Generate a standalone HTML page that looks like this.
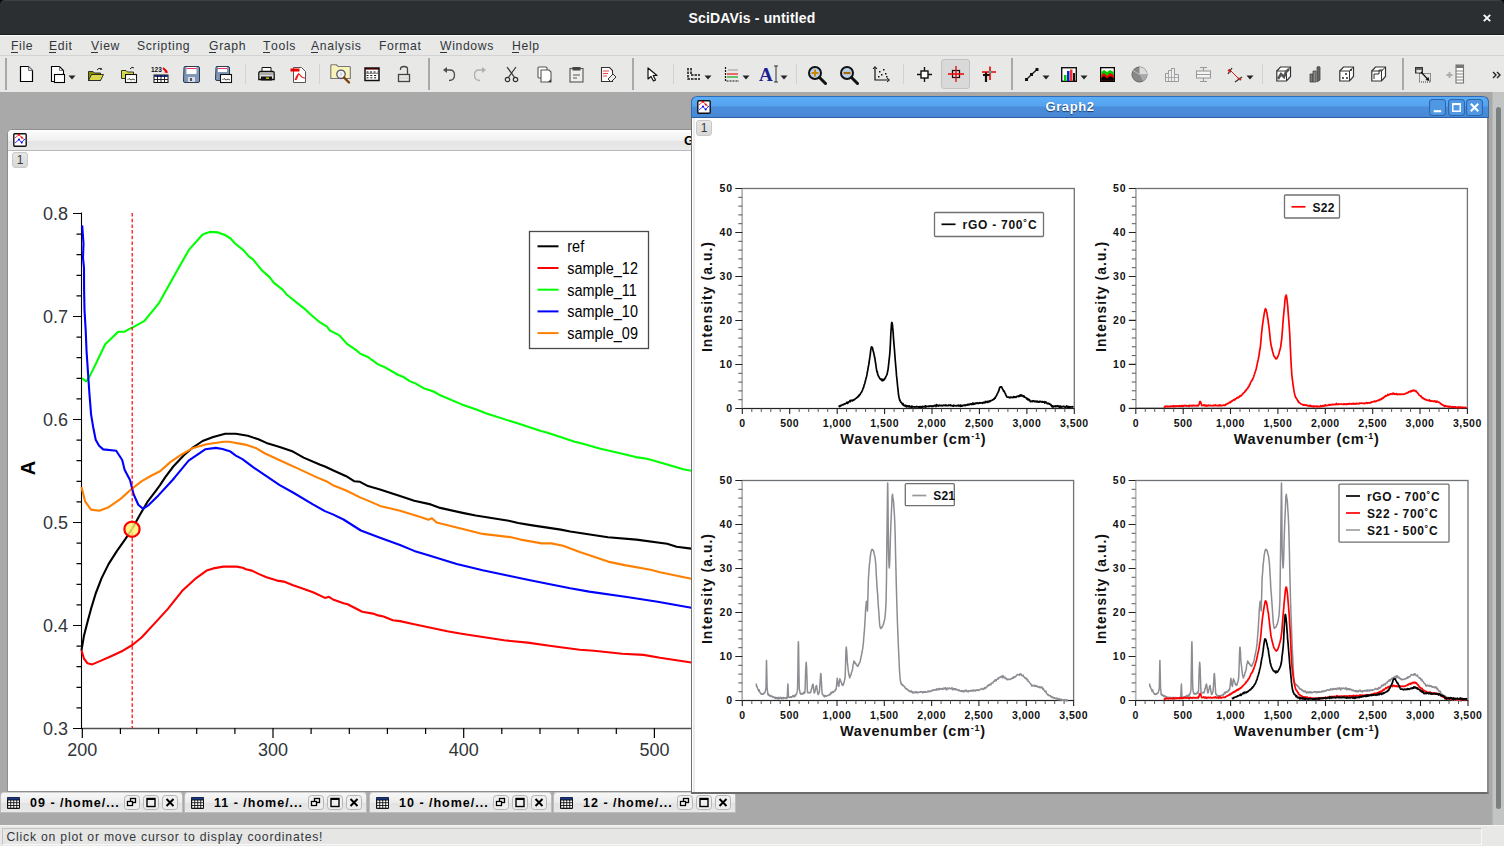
<!DOCTYPE html><html><head><meta charset="utf-8"><style>

*{margin:0;padding:0;box-sizing:border-box}
html,body{width:1504px;height:846px;overflow:hidden;background:#a9a9a9;font-family:"Liberation Sans",sans-serif;position:relative}
.a{position:absolute}
svg{position:absolute;overflow:visible}
#title{left:0;top:0;width:1504px;height:35px;background:#2b2f32;border-radius:5px 5px 0 0;border-top:1px solid #3c4145;border-bottom:1px solid #1a1c1e}
#title .t{left:0;width:1504px;top:9px;text-align:center;color:#fcfcfc;font-weight:bold;font-size:14px;letter-spacing:0.15px;line-height:16px}
#menubar{left:0;top:35px;width:1504px;height:21px;background:#e8e8e7;border-top:1px solid #fbfbfb;border-bottom:1px solid #d3d3d3}
#menubar span{position:absolute;top:3px;font-size:12.2px;line-height:14px;color:#31363b;white-space:nowrap;letter-spacing:0.65px}
#menubar u{text-decoration:none;position:relative}
#menubar u:after{content:"";position:absolute;left:0;width:7px;bottom:0px;height:1px;background:#31363b}
#toolbar{left:0;top:56px;width:1504px;height:36px;background:#e8e8e7}
.sepd{position:absolute;top:2px;width:2px;height:32px;background:#a9a9a9}
.sepl{position:absolute;top:8px;width:1px;height:20px;background:#d2d2d2}
#mdi{left:0;top:92px;width:1504px;height:733px;background:#a9a9a9;overflow:hidden}
#status{left:0;top:825px;width:1504px;height:21px;background:#e8e8e7;border-top:1px solid #f6f6f6}
#sfield{left:2px;top:2px;width:1480px;height:17px;border:1px solid #c3c3c3;border-bottom-color:#f8f8f8;border-right-color:#f8f8f8;background:#e6e6e5}
#sfield span{position:absolute;left:3.5px;top:1px;font-size:12.2px;line-height:14px;color:#31363b;letter-spacing:0.79px;white-space:nowrap}

</style></head><body>
<div class="a" style="left:0;top:0;width:1504px;height:8px;background:#050607"></div>
<div id="title" class="a"><div class="t a">SciDAVis - untitled</div>
<svg style="left:1483px;top:13px" width="8" height="8"><path d="M0.8 0.8L7.2 7.2M7.2 0.8L0.8 7.2" stroke="#fcfcfc" stroke-width="1.9"/></svg>
</div>
<div id="menubar" class="a">
<span style="left:11px"><u>F</u>ile</span>
<span style="left:49px"><u>E</u>dit</span>
<span style="left:91px"><u>V</u>iew</span>
<span style="left:137px">Scripting</span>
<span style="left:209px"><u>G</u>raph</span>
<span style="left:263px"><u>T</u>ools</span>
<span style="left:311px"><u>A</u>nalysis</span>
<span style="left:379px">For<u>m</u>at</span>
<span style="left:440px"><u>W</u>indows</span>
<span style="left:512px"><u>H</u>elp</span>
</div>
<div id="toolbar" class="a">
<div class="sepd" style="left:5px"></div>
<div class="sepd" style="left:428px"></div>
<div class="sepd" style="left:632px"></div>
<div class="sepd" style="left:1011px"></div>
<div class="sepd" style="left:1402px"></div>
<div class="sepl" style="left:245px"></div>
<div class="sepl" style="left:319px"></div>
<div class="sepl" style="left:673px"></div>
<div class="sepl" style="left:796px"></div>
<div class="sepl" style="left:903px"></div>
<div class="sepl" style="left:1262px"></div>
<svg style="left:19px;top:10px" width="15" height="17" viewBox="0 0 15 17"><path d="M1.5 0.5H9.5L13.5 4.5V15.5H1.5Z" fill="#fff" stroke="#000" stroke-width="1.2"/><path d="M9.5 0.5V4.5H13.5" fill="#cfd8e6" stroke="#555" stroke-width="0.8"/></svg>
<svg style="left:50px;top:10px" width="16" height="18" viewBox="0 0 16 18"><path d="M1.5 0.5H9.5L13.5 4.5V15.5H1.5Z" fill="#fff" stroke="#000" stroke-width="1.1"/><path d="M9.5 0.5V4.5H13.5" fill="none" stroke="#555" stroke-width="0.8"/><rect x="4.5" y="8.5" width="10" height="8" fill="#fff" stroke="#000" stroke-width="1.1"/></svg>
<svg style="left:68px;top:19px" width="8" height="5" viewBox="0 0 8 5"><path d="M0.5 0.5H7.5L4 4.5Z" fill="#232627"/></svg>
<svg style="left:88px;top:11px" width="16" height="15" viewBox="0 0 16 15"><path d="M0.5 4.5H5L6.5 6H12.5V13.5H0.5Z" fill="#8c8c00" stroke="#222" stroke-width="0.9"/><path d="M0.5 13.5L3.5 7.5H15.5L12.5 13.5Z" fill="#d8d84a" stroke="#222" stroke-width="0.9"/><path d="M9 3Q11 0 13 2" fill="none" stroke="#222" stroke-width="1"/><path d="M13 0.5L14.5 2.5L12 3Z" fill="#222"/></svg>
<svg style="left:121px;top:10px" width="16" height="17" viewBox="0 0 16 17"><path d="M0.5 4.5H5L6.5 6H12.5V12.5H0.5Z" fill="#d8d84a" stroke="#222" stroke-width="0.9"/><path d="M9 3Q11 0 13 2" fill="none" stroke="#222" stroke-width="1"/><rect x="4.5" y="8.5" width="11" height="8" fill="#fff" stroke="#111" stroke-width="1.1"/><path d="M6.5 14L8 12.5L10 14L12 13L14 14" fill="none" stroke="#111" stroke-width="0.8"/></svg>
<svg style="left:151px;top:10px" width="18" height="17" viewBox="0 0 18 17"><text x="0" y="6" font-size="6.5" font-weight="bold" font-family="Liberation Sans" fill="#111">123</text><path d="M12 2L16 6" stroke="#e00" stroke-width="2"/><path d="M15 3.5L17 7L13.5 6.5Z" fill="#e00"/><rect x="3" y="9" width="14" height="7.5" fill="#fff" stroke="#111"/><rect x="3" y="9" width="14" height="2" fill="#203080"/><path d="M3 13.5H17M6.5 9V16.5M10 9V16.5M13.5 9V16.5" stroke="#111" stroke-width="0.9"/></svg>
<svg style="left:183px;top:10px" width="18" height="17" viewBox="0 0 18 17"><path d="M1 1.5Q1 0.5 2 0.5H15Q16.5 0.5 16.5 2V15Q16.5 16.5 15 16.5H2Q0.5 16.5 0.5 15Z" fill="#7f98b8" stroke="#2a3a50" stroke-width="1"/><rect x="3.5" y="1" width="10" height="7" fill="#fff"/><path d="M3.5 2.5H13.5" stroke="#e36" stroke-width="1"/><rect x="5" y="11" width="7" height="5" fill="#d8dde6"/><rect x="7" y="12" width="2" height="3" fill="#555"/></svg>
<svg style="left:215px;top:10px" width="18" height="17" viewBox="0 0 18 17"><path d="M1 1.5Q1 0.5 2 0.5H13Q14.5 0.5 14.5 2V13Q14.5 14.5 13 14.5H2Q0.5 14.5 0.5 13Z" fill="#7f98b8" stroke="#2a3a50" stroke-width="1"/><rect x="3" y="1" width="9" height="5" fill="#fff"/><path d="M3 2.5H12" stroke="#e36" stroke-width="1"/><rect x="5.5" y="8.5" width="11" height="8" fill="#fff" stroke="#111" stroke-width="1.1"/><path d="M7.5 14L9 12.5L11 14L13 13L15 14" fill="none" stroke="#111" stroke-width="0.8"/></svg>
<svg style="left:258px;top:11px" width="17" height="15" viewBox="0 0 17 15"><path d="M4 0.5H13V5H4Z" fill="#fff" stroke="#111"/><path d="M0.8 6Q0.8 4.5 2.5 4.5H14.5Q16.2 4.5 16.2 6V12.5H0.8Z" fill="#ddd" stroke="#111" stroke-width="1.3"/><rect x="3" y="9.5" width="11" height="4" fill="#111"/><rect x="8" y="10.5" width="3" height="1.2" fill="#ee0"/><path d="M2 7H15" stroke="#666" stroke-width="0.8"/></svg>
<svg style="left:290px;top:10px" width="17" height="17" viewBox="0 0 17 17"><path d="M3.5 1.5H11.5L15.5 5.5V16.5H3.5Z" fill="#fff" stroke="#555" stroke-width="1"/><rect x="0.5" y="2.5" width="9" height="3" fill="#e00"/><path d="M5 14Q8 6 10 9Q12 12 15 12M9 7Q7 12 6 14" fill="none" stroke="#e22" stroke-width="1.1"/></svg>
<svg style="left:330px;top:8px" width="22" height="21" viewBox="0 0 22 21"><path d="M0.8 1.5Q0.8 0.8 1.5 0.8H6.5L8 2.5H19.5Q20.3 2.5 20.3 3.3V14.5H0.8Z" fill="#f8f3b8" stroke="#777" stroke-width="1.1"/><circle cx="11" cy="10.3" r="4.2" fill="#eef2f6" stroke="#556" stroke-width="1.3"/><path d="M11 8.5V11.5" stroke="#bbb" stroke-width="1"/><path d="M14 13.5L19 18.5" stroke="#7a4010" stroke-width="2.4" stroke-linecap="round"/></svg>
<svg style="left:364px;top:11px" width="16" height="15" viewBox="0 0 16 15"><rect x="1" y="1" width="14" height="12.5" fill="#fff" stroke="#111" stroke-width="1.5"/><rect x="1" y="1" width="14" height="1.6" fill="#400"/><path d="M2.5 5H13.5" stroke="#555" stroke-width="1.6" stroke-dasharray="2 1.5"/><path d="M2 6.3H14" stroke="#333" stroke-width="0.7"/><path d="M2.5 8.5H13.5M2.5 10.8H13.5" stroke="#111" stroke-width="1" stroke-dasharray="2 1.8"/></svg>
<svg style="left:397px;top:9px" width="14" height="18" viewBox="0 0 14 18"><path d="M3.5 5V4Q3.5 1.5 7 1.5Q10.5 1.5 10.5 4V9" fill="none" stroke="#444" stroke-width="1.3"/><rect x="1.5" y="9.5" width="11" height="7" fill="none" stroke="#444" stroke-width="1.3"/><path d="M3 13H11" stroke="#ccc" stroke-width="1"/></svg>
<svg style="left:442px;top:10px" width="14" height="17" viewBox="0 0 14 17"><path d="M4 4H8Q12.5 4 12.5 9Q12.5 14.5 7 14.5" fill="none" stroke="#4d4d4d" stroke-width="1.3"/><path d="M1 4L5 1V7Z" fill="#4d4d4d"/></svg>
<svg style="left:473px;top:10px" width="14" height="17" viewBox="0 0 14 17"><path d="M10 4H6Q1.5 4 1.5 9Q1.5 14.5 7 14.5" fill="none" stroke="#b0b0b0" stroke-width="1.3"/><path d="M13 4L9 1V7Z" fill="#b0b0b0"/></svg>
<svg style="left:504px;top:10px" width="15" height="17" viewBox="0 0 15 17"><path d="M3 1L11 12M12 1L4 12" stroke="#333" stroke-width="1.2"/><circle cx="3.5" cy="13.5" r="2.2" fill="none" stroke="#333" stroke-width="1.2"/><circle cx="11.5" cy="13.5" r="2.2" fill="none" stroke="#333" stroke-width="1.2"/></svg>
<svg style="left:537px;top:10px" width="15" height="17" viewBox="0 0 15 17"><rect x="1" y="1" width="9" height="11" rx="1" fill="#fff" stroke="#555" stroke-width="1.1"/><path d="M4 4H12L14 6V16H4Z" fill="#fff" stroke="#555" stroke-width="1.1"/><path d="M11 16L14 13V16Z" fill="#333"/></svg>
<svg style="left:569px;top:10px" width="15" height="17" viewBox="0 0 15 17"><rect x="1" y="2.5" width="13" height="13.5" fill="#eee" stroke="#555" stroke-width="1.1"/><rect x="3.5" y="1" width="8" height="3.5" fill="#444"/><path d="M4 9H11M4 12H8" stroke="#555" stroke-width="1"/></svg>
<svg style="left:600px;top:10px" width="17" height="17" viewBox="0 0 17 17"><path d="M1.5 1.5H9.5L12.5 4.5V15.5H1.5Z" fill="#fff" stroke="#333" stroke-width="1.1"/><path d="M3 5H9M3 7.5H8M3 10H7" stroke="#e44" stroke-width="1.1"/><path d="M8 13L13 8L16 11L11 16Z" fill="#eee" stroke="#333" stroke-width="1"/></svg>
<svg style="left:647px;top:11px" width="11" height="15" viewBox="0 0 11 15"><path d="M1 1V12L4 9.5L6.5 14L8.5 13L6.2 8.5H10Z" fill="#fff" stroke="#111" stroke-width="1.2" stroke-linejoin="round"/></svg>
<svg style="left:686px;top:11px" width="16" height="15" viewBox="0 0 16 15"><path d="M2 1V12H14M5 1V8H14" fill="none" stroke="#111" stroke-width="1.5" stroke-dasharray="2.5 1"/></svg>
<svg style="left:704px;top:19px" width="8" height="5" viewBox="0 0 8 5"><path d="M0.5 0.5H7.5L4 4.5Z" fill="#232627"/></svg>
<svg style="left:724px;top:10px" width="16" height="16" viewBox="0 0 16 16"><path d="M1.5 1V15H15" fill="none" stroke="#111" stroke-width="1.2" stroke-dasharray="2 1"/><path d="M3 8H14" stroke="#e22" stroke-width="1.3"/><path d="M3 11H14" stroke="#2a2" stroke-width="1.3"/><path d="M4 4H14" stroke="#888" stroke-width="0.8"/></svg>
<svg style="left:742px;top:19px" width="8" height="5" viewBox="0 0 8 5"><path d="M0.5 0.5H7.5L4 4.5Z" fill="#232627"/></svg>
<svg style="left:759px;top:8px" width="20" height="20" viewBox="0 0 20 20"><text x="0" y="17" font-size="19" font-weight="bold" font-family="Liberation Serif" fill="#1a2090">A</text><path d="M15 2H19M17 2V18M15 18H19" stroke="#333" stroke-width="1"/></svg>
<svg style="left:780px;top:19px" width="8" height="5" viewBox="0 0 8 5"><path d="M0.5 0.5H7.5L4 4.5Z" fill="#232627"/></svg>
<svg style="left:807px;top:9px" width="21" height="20" viewBox="0 0 21 20"><circle cx="8" cy="8" r="6" fill="#b9d0ea" stroke="#111" stroke-width="2"/><path d="M8 4.5V11.5M4.5 8H11.5" stroke="#c80" stroke-width="2"/><path d="M12.5 12.5L18.5 18.5" stroke="#111" stroke-width="3" stroke-linecap="round"/></svg>
<svg style="left:839px;top:9px" width="21" height="20" viewBox="0 0 21 20"><circle cx="8" cy="8" r="6" fill="#b9d0ea" stroke="#111" stroke-width="2"/><path d="M4.5 8H11.5" stroke="#a60" stroke-width="2.2"/><path d="M12.5 12.5L18.5 18.5" stroke="#111" stroke-width="3" stroke-linecap="round"/></svg>
<svg style="left:873px;top:10px" width="17" height="16" viewBox="0 0 17 16"><path d="M2 1V14H16" fill="none" stroke="#111" stroke-width="1.2"/><path d="M0 3L2 0.5L4 3M14 12L16.5 14L14 16" fill="none" stroke="#111" stroke-width="1"/><path d="M6 5h1.5v1.5h-1.5zM10 3h1.5v1.5h-1.5zM8 8h1.5v1.5h-1.5zM12 7h1.5v1.5h-1.5zM5 10h1.5v1.5h-1.5zM13 10h1.5v1.5h-1.5z" fill="#111"/></svg>
<svg style="left:917px;top:11px" width="15" height="15" viewBox="0 0 15 15"><path d="M7.5 0V15M0 7.5H15" stroke="#111" stroke-width="1.4"/><rect x="4" y="4" width="7" height="7" fill="#fff" stroke="#111" stroke-width="1.4"/></svg>
<div class="a" style="left:941px;top:3px;width:29px;height:30px;background:#d9d9d9;border:1px solid #c3c3c3;border-radius:3px"></div>
<svg style="left:948px;top:10px" width="16" height="16" viewBox="0 0 16 16"><rect x="4.5" y="4.5" width="7" height="7" fill="none" stroke="#111" stroke-width="1.2"/><path d="M8 0V16M0 8H16" stroke="#e00" stroke-width="1.3"/></svg>
<svg style="left:980px;top:10px" width="17" height="17" viewBox="0 0 17 17"><path d="M3 9H10M6 6V16" stroke="#111" stroke-width="2.2"/><path d="M2 6H16M10 0.5V14" stroke="#e00" stroke-width="1.6"/><rect x="9" y="5" width="2" height="2" fill="#0cc"/></svg>
<svg style="left:1025px;top:12px" width="14" height="13" viewBox="0 0 14 13"><path d="M1.5 11.5L6.5 6.5L12 1.5" stroke="#111" stroke-width="1.2"/><rect x="0" y="10" width="3" height="3" fill="#111"/><rect x="5" y="5" width="3" height="3" fill="#111"/><rect x="10.5" y="0" width="3" height="3" fill="#111"/></svg>
<svg style="left:1042px;top:19px" width="8" height="5" viewBox="0 0 8 5"><path d="M0.5 0.5H7.5L4 4.5Z" fill="#232627"/></svg>
<svg style="left:1061px;top:11px" width="16" height="15" viewBox="0 0 16 15"><rect x="0.7" y="0.7" width="14.6" height="13.6" fill="#fff" stroke="#111" stroke-width="1.4"/><rect x="3" y="8" width="2.5" height="6" fill="#0c0"/><rect x="6" y="4" width="2.5" height="10" fill="#12c"/><rect x="9" y="2.5" width="2.5" height="11.5" fill="#e33"/><rect x="12" y="6" width="2" height="8" fill="#111"/></svg>
<svg style="left:1080px;top:19px" width="8" height="5" viewBox="0 0 8 5"><path d="M0.5 0.5H7.5L4 4.5Z" fill="#232627"/></svg>
<svg style="left:1100px;top:11px" width="15" height="15" viewBox="0 0 15 15"><rect x="0" y="0" width="15" height="15" fill="#000"/><rect x="1.3" y="1.3" width="12.4" height="12.4" fill="#fff"/><path d="M1.3 5L4 3L7 5L10 3L13.7 5V13.7H1.3Z" fill="#0c0"/><path d="M1.3 8L4 6L7 9L10 6L13.7 8V13.7H1.3Z" fill="#e00"/><path d="M1.3 11L4 9L7 11.5L10 9L13.7 11V13.7H1.3Z" fill="#000"/></svg>
<svg style="left:1131px;top:10px" width="17" height="17" viewBox="0 0 17 17"><circle cx="8.5" cy="8.5" r="7.5" fill="#888" stroke="#666" stroke-width="1"/><path d="M8.5 8.5L8.5 1A7.5 7.5 0 0 1 16 8.5Z" fill="#ddd"/><path d="M8.5 8.5L16 8.5A7.5 7.5 0 0 1 12 15Z" fill="#aaa"/><path d="M8.5 8.5L2 4.5" stroke="#ccc" stroke-width="0.8"/></svg>
<svg style="left:1165px;top:11px" width="14" height="15" viewBox="0 0 14 15"><path d="M0.5 14.5V6.5H3.5V3.5H6.5V1.5H9.5V7.5H13.5V14.5Z" fill="#eee" stroke="#999" stroke-width="1"/><path d="M3.5 6.5V14.5M6.5 3.5V14.5M9.5 7.5V14.5M0.5 10.5H13.5" stroke="#999" stroke-width="0.8"/></svg>
<svg style="left:1196px;top:11px" width="15" height="15" viewBox="0 0 15 15"><path d="M7.5 0.5V4M7.5 11V14.5M4 0.5H11M4 14.5H11" stroke="#999" stroke-width="1.1"/><rect x="0.5" y="4" width="14" height="7" fill="#f4f4f4" stroke="#999" stroke-width="1.1"/><path d="M0.5 7.5H14.5" stroke="#999" stroke-width="1"/></svg>
<svg style="left:1227px;top:10px" width="16" height="17" viewBox="0 0 16 17"><path d="M2 3L13 14" stroke="#c22" stroke-width="1"/><path d="M1 8L5 2M8 16L15 11" stroke="#333" stroke-width="1.3"/><path d="M4 6L1 4" stroke="#c22" stroke-width="1.8"/><path d="M11 12L14 14" stroke="#c22" stroke-width="1.8"/></svg>
<svg style="left:1246px;top:19px" width="8" height="5" viewBox="0 0 8 5"><path d="M0.5 0.5H7.5L4 4.5Z" fill="#232627"/></svg>
<svg style="left:1276px;top:10px" width="16" height="16" viewBox="0 0 16 16"><path d="M0.8 5L4.5 1H14.5V10.5L10.5 15H0.8Z" fill="#fff" stroke="#333" stroke-width="1.2"/><path d="M0.8 5H10.5V15M10.5 5L14.5 1" fill="none" stroke="#333" stroke-width="1"/><path d="M2 13L5 8L8 11L10 6L13 3" stroke="#555" stroke-width="2.5" fill="none"/></svg>
<svg style="left:1309px;top:9px" width="13" height="18" viewBox="0 0 13 18"><path d="M1 9H4V17H1Z" fill="#777" stroke="#444" stroke-width="0.8"/><path d="M4 6H7V17H4Z" fill="#888" stroke="#444" stroke-width="0.8"/><path d="M8 2Q9.5 1 11 2V15L8 17Z" fill="#666" stroke="#444" stroke-width="0.8"/></svg>
<svg style="left:1339px;top:10px" width="17" height="16" viewBox="0 0 17 16"><path d="M0.8 5L4.5 1H14.5V10.5L10.5 15H0.8Z" fill="#fff" stroke="#333" stroke-width="1.2"/><path d="M0.8 5H10.5V15M10.5 5L14.5 1" fill="none" stroke="#333" stroke-width="1"/><circle cx="7" cy="8" r="0.9" fill="#111"/><circle cx="12" cy="4" r="0.9" fill="#111"/><circle cx="4" cy="12" r="0.9" fill="#111"/><circle cx="8" cy="12" r="0.9" fill="#111"/></svg>
<svg style="left:1371px;top:10px" width="17" height="16" viewBox="0 0 17 16"><path d="M0.8 5L4.5 1H14.5V10.5L10.5 15H0.8Z" fill="#fff" stroke="#333" stroke-width="1.2"/><path d="M0.8 5H10.5V15M10.5 5L14.5 1" fill="none" stroke="#333" stroke-width="1"/><path d="M3 13V8H8V4H12" fill="none" stroke="#333" stroke-width="1"/></svg>
<svg style="left:1415px;top:11px" width="17" height="16" viewBox="0 0 17 16"><rect x="0.5" y="0.5" width="7" height="5.5" fill="#666" stroke="#333"/><rect x="1.5" y="3" width="5" height="2.5" fill="#e8e8e8"/><rect x="4.5" y="6.5" width="11" height="8.5" fill="none" stroke="#333" stroke-width="1" stroke-dasharray="1 1"/><path d="M6 5L13 12.5" stroke="#111" stroke-width="1.2"/><path d="M14.5 14L10.5 13L13.5 10Z" fill="#111"/></svg>
<svg style="left:1446px;top:8px" width="18" height="20" viewBox="0 0 18 20"><path d="M3.5 8V14M0.5 11H6.5" stroke="#aaa" stroke-width="1.8"/><rect x="10" y="1" width="7.5" height="18" fill="#fff" stroke="#777" stroke-width="1.1"/><rect x="10" y="1" width="7.5" height="3" fill="#777"/><path d="M10 7H17.5M10 10H17.5M10 13H17.5M10 16H17.5" stroke="#777" stroke-width="0.9"/></svg>
<svg style="left:1492px;top:15px" width="10" height="8" viewBox="0 0 10 8"><path d="M1 1L4 4L1 7M5 1L8 4L5 7" fill="none" stroke="#222" stroke-width="1.4"/></svg>
</div>
<div id="mdi" class="a"></div>
<div class="a" style="left:1492px;top:92px;width:12px;height:733px;background:#c3c5c5;border-left:1px solid #b4b6b6"></div><div class="a" style="left:1496px;top:107px;width:5px;height:702px;background:#7a7f80;border-radius:3px"></div>
<div class="a" style="left:7px;top:129px;width:700px;height:663px;background:#fff;border:1px solid #8e8e8e;border-radius:5px 5px 0 0;overflow:hidden">
<div class="a" style="left:0;top:0;width:100%;height:21px;background:linear-gradient(#fbfbfb 0,#f0f0f0 50%,#e4e4e4 51%,#e9e9e9 100%);border-bottom:1px solid #b9b9b9;border-top:1px solid #fff"></div>
<svg style="left:5px;top:3px" width="14" height="14" viewBox="0 0 14 14"><rect x="0.8" y="0.8" width="12.4" height="12.4" rx="1" fill="#fff" stroke="#111" stroke-width="1.4"/><path d="M2 5L6 1.5L8.5 4.5L12 7" fill="none" stroke="#f22" stroke-width="0.9"/><path d="M2 10L6 6.5L8.5 9.5L12.5 5.5" fill="none" stroke="#22f" stroke-width="0.9"/><circle cx="6" cy="1.8" r="1" fill="#e00"/><circle cx="8.7" cy="4.6" r="1" fill="#e00"/><circle cx="6" cy="6.6" r="1" fill="#00e"/><circle cx="8.7" cy="9.6" r="1" fill="#00e"/></svg>
<div class="a" style="left:676px;top:4px;font-weight:bold;font-size:13px;color:#000;line-height:14px">Graph1</div>
<div class="a" style="left:4px;top:22px;width:16px;height:16px;border:1px solid #c8c8c8;border-radius:3px;background:linear-gradient(#e6e6e6,#d8d8d8);font-size:12px;color:#3a3a3a;text-align:center;line-height:14px">1</div>
</div>
<svg style="left:0;top:0" width="692" height="792" viewBox="0 0 692 792">
<defs><clipPath id="lc"><rect x="8" y="151" width="684" height="640"/></clipPath></defs>
<g clip-path="url(#lc)">
<path d="M81.5 212.5V728" stroke="#000" stroke-width="1.1"/>
<path d="M81.5 728.5H700" stroke="#505050" stroke-width="1.6"/>
<path d="M73 213.5H82 M76.5 234.1H82 M76.5 254.7H82 M76.5 275.3H82 M76.5 295.9H82 M73 316.5H82 M76.5 337.1H82 M76.5 357.7H82 M76.5 378.3H82 M76.5 398.9H82 M73 419.5H82 M76.5 440.1H82 M76.5 460.7H82 M76.5 481.3H82 M76.5 501.9H82 M73 522.5H82 M76.5 543.1H82 M76.5 563.7H82 M76.5 584.3H82 M76.5 604.9H82 M73 625.5H82 M76.5 646.1H82 M76.5 666.7H82 M76.5 687.3H82 M76.5 707.9H82 M73 728.5H82" stroke="#000" stroke-width="1.2"/>
<path d="M82.3 728V738 M120.4 728V734 M158.6 728V734 M196.7 728V734 M234.9 728V734 M273.0 728V738 M311.1 728V734 M349.3 728V734 M387.4 728V734 M425.6 728V734 M463.7 728V738 M501.8 728V734 M540.0 728V734 M578.1 728V734 M616.3 728V734 M654.4 728V738 M692.5 728V734" stroke="#000" stroke-width="1.2"/>
<text x="68" y="220.0" text-anchor="end" font-size="18" font-family="Liberation Sans" fill="#31363b">0.8</text>
<text x="68" y="323.0" text-anchor="end" font-size="18" font-family="Liberation Sans" fill="#31363b">0.7</text>
<text x="68" y="426.0" text-anchor="end" font-size="18" font-family="Liberation Sans" fill="#31363b">0.6</text>
<text x="68" y="529.0" text-anchor="end" font-size="18" font-family="Liberation Sans" fill="#31363b">0.5</text>
<text x="68" y="632.0" text-anchor="end" font-size="18" font-family="Liberation Sans" fill="#31363b">0.4</text>
<text x="68" y="735.0" text-anchor="end" font-size="18" font-family="Liberation Sans" fill="#31363b">0.3</text>
<text x="82.3" y="756" text-anchor="middle" font-size="18" font-family="Liberation Sans" fill="#31363b">200</text>
<text x="273.0" y="756" text-anchor="middle" font-size="18" font-family="Liberation Sans" fill="#31363b">300</text>
<text x="463.7" y="756" text-anchor="middle" font-size="18" font-family="Liberation Sans" fill="#31363b">400</text>
<text x="654.4" y="756" text-anchor="middle" font-size="18" font-family="Liberation Sans" fill="#31363b">500</text>
<text transform="translate(35 468) rotate(-90)" text-anchor="middle" font-size="20" font-weight="bold" font-family="Liberation Sans" fill="#000">A</text>
<polyline points="82.1,378.4 86.1,381.4 89.1,377.4 95.1,365.4 105.2,344.3 118.2,331.8 124.3,331.8 129.9,328.6 132.9,327.4 144.5,320.8 159.3,302.6 175.9,272.8 189.1,249.6 202.4,234.7 205.0,233.6 209.9,231.9 218.2,232.4 224.8,234.9 230.6,238.5 234.8,243.2 243.9,250.6 248.8,256.4 253.0,259.4 261.3,269.7 269.5,277.1 273.7,282.6 282.8,289.9 286.9,294.8 304.3,308.6 310.9,314.7 319.2,321.8 326.7,326.3 330.0,330.6 339.1,335.1 347.4,344.2 354.8,349.1 359.0,352.5 360.0,353.6 367.9,357.0 378.1,364.4 383.7,366.7 398.4,375.0 404.1,377.3 409.7,381.1 415.4,383.4 424.4,388.6 433.5,391.5 439.1,394.7 461.7,404.4 476.4,409.6 486.6,413.5 518.2,423.6 540.9,431.1 547.6,432.7 574.8,441.7 583.8,444.0 599.6,448.5 622.2,453.7 635.8,457.1 647.1,458.7 662.9,463.2 683.3,469.3 691.3,470.8" fill="none" stroke="#00ff00" stroke-width="2.1" stroke-linejoin="round"/>
<polyline points="81.5,650.3 83.9,636.1 87.5,621.9 91.0,608.9 95.7,593.5 101.6,578.1 108.7,563.9 117.0,550.9 125.3,539.1 132.4,528.5 139.5,515.5 147.8,501.3 156.0,490.6 160.0,485.2 165.3,477.2 173.3,466.5 183.9,455.2 193.2,447.3 202.6,441.0 213.2,437.0 225.2,433.7 235.8,433.7 247.8,435.7 258.4,439.3 266.4,442.9 279.7,447.0 293.0,451.6 303.6,457.6 319.6,464.5 324.9,466.5 332.9,470.3 346.2,476.2 354.1,481.2 360.0,481.8 368.0,486.1 380.0,489.4 400.0,496.1 414.2,500.8 430.7,504.4 440.2,507.9 463.8,513.1 475.7,515.5 508.7,520.7 518.2,523.0 532.4,525.4 560.8,529.6 570.2,531.5 608.0,537.2 636.4,539.6 667.1,543.8 676.6,546.7 691.3,548.6" fill="none" stroke="#000000" stroke-width="2.1" stroke-linejoin="round"/>
<polyline points="81.5,487.1 85.1,501.3 91.0,509.6 99.3,510.7 108.7,507.2 120.6,498.9 132.4,488.3 141.8,481.2 151.6,475.5 160.0,471.2 170.6,461.9 181.3,454.6 193.2,447.9 206.5,444.2 223.8,441.7 229.1,441.7 245.1,444.6 255.7,447.9 265.1,453.5 286.3,463.2 297.0,468.1 316.9,477.4 326.2,481.2 332.9,485.2 346.2,490.5 360.0,497.4 371.5,502.1 380.0,505.9 400.0,510.7 418.9,516.6 428.4,519.7 431.9,518.3 436.6,522.6 463.8,529.2 482.7,533.9 511.1,537.2 520.6,539.6 541.8,543.4 551.3,543.4 563.1,545.7 579.7,552.1 608.0,561.6 624.6,565.1 650.6,569.8 660.0,572.2 691.3,578.8" fill="none" stroke="#ff8000" stroke-width="2.1" stroke-linejoin="round"/>
<polyline points="82.2,225.4 83.5,243.8 83.0,258.0 84.0,268.0 84.1,290.0 84.5,310.1 85.7,330.2 86.5,350.3 88.1,374.4 89.5,394.5 91.1,414.6 93.1,426.7 95.7,439.7 99.1,445.7 103.2,449.4 116.2,450.8 122.2,460.0 124.6,469.7 130.0,480.0 133.6,494.2 138.3,504.8 143.0,508.8 148.9,504.8 158.4,495.4 172.6,480.0 176.0,475.9 188.6,460.6 205.2,449.3 215.9,447.9 222.5,449.0 230.5,451.6 235.8,455.6 242.4,459.2 253.1,467.2 279.7,485.2 293.0,492.5 312.9,504.4 324.9,511.1 332.9,514.4 343.5,519.5 360.9,530.5 380.0,537.8 400.0,545.0 414.2,550.9 428.4,555.2 456.7,563.9 482.7,570.3 508.7,575.7 527.7,579.8 551.3,584.5 570.2,588.3 589.1,591.6 626.9,597.0 657.7,601.7 691.3,607.7" fill="none" stroke="#0000ff" stroke-width="2.1" stroke-linejoin="round"/>
<polyline points="81.5,650.3 83.9,658.5 87.5,663.3 92.2,664.4 100.5,660.9 111.1,656.2 122.9,650.7 132.4,645.0 141.8,637.2 156.0,621.9 167.9,608.9 182.0,591.1 196.2,578.1 200.0,575.3 206.6,570.6 213.3,568.4 223.3,566.6 236.6,566.6 242.6,567.7 245.9,569.3 251.9,570.6 258.5,573.9 266.5,577.3 277.1,580.6 283.8,581.6 293.1,585.2 301.1,587.9 313.0,592.3 325.0,597.9 329.0,596.8 333.0,599.5 343.6,603.2 347.6,604.3 362.2,611.8 372.9,613.6 378.2,615.4 383.5,616.5 392.8,620.2 400.0,621.1 414.2,624.2 447.3,631.3 461.5,633.7 504.0,640.3 527.7,642.6 551.3,646.0 579.7,649.7 593.9,650.7 622.2,653.8 643.5,654.9 660.0,657.8 691.3,662.5" fill="none" stroke="#ff0000" stroke-width="2.1" stroke-linejoin="round"/>
<path d="M132.2 213V728" stroke="#ff0000" stroke-width="1.2" stroke-dasharray="3.5 2.2"/>
<circle cx="132" cy="529.2" r="7.6" fill="#fff270" fill-opacity="0.8" stroke="#ff0000" stroke-width="2.2"/>

<rect x="529.5" y="231.5" width="119" height="117" fill="#fff" stroke="#4a4a4a" stroke-width="1.3"/>
<path d="M537.5 246.3H558.5" stroke="#000000" stroke-width="2"/>
<text x="0" y="0" transform="translate(567.3 252.1) scale(0.875 1)" font-size="16.5" font-family="Liberation Sans" fill="#000">ref</text>
<path d="M537.5 268.0H558.5" stroke="#ff0000" stroke-width="2"/>
<text x="0" y="0" transform="translate(567.3 273.8) scale(0.875 1)" font-size="16.5" font-family="Liberation Sans" fill="#000">sample_12</text>
<path d="M537.5 289.7H558.5" stroke="#00ff00" stroke-width="2"/>
<text x="0" y="0" transform="translate(567.3 295.5) scale(0.875 1)" font-size="16.5" font-family="Liberation Sans" fill="#000">sample_11</text>
<path d="M537.5 311.4H558.5" stroke="#0000ff" stroke-width="2"/>
<text x="0" y="0" transform="translate(567.3 317.2) scale(0.875 1)" font-size="16.5" font-family="Liberation Sans" fill="#000">sample_10</text>
<path d="M537.5 333.1H558.5" stroke="#ff8000" stroke-width="2"/>
<text x="0" y="0" transform="translate(567.3 338.9) scale(0.875 1)" font-size="16.5" font-family="Liberation Sans" fill="#000">sample_09</text>
</g></svg>
<div class="a" style="left:0px;top:792px;width:183px;height:21px;background:linear-gradient(#f7f7f7,#ececec 50%,#e2e2e2 51%,#e8e8e8);border:1px solid #bdbdbd;border-top-color:#d0d0d0;border-radius:4px 4px 0 0"></div>
<svg style="left:7px;top:797px" width="13" height="12" viewBox="0 0 13 12"><rect x="0" y="0" width="13" height="12" rx="1" fill="#111"/><rect x="0.5" y="0.5" width="12" height="2" fill="#1a3a8a"/><g fill="#fff"><rect x="1.2" y="3.5" width="2.1" height="1.8"/><rect x="4.2" y="3.5" width="2.1" height="1.8"/><rect x="7.2" y="3.5" width="2.1" height="1.8"/><rect x="10.2" y="3.5" width="1.8" height="1.8"/><rect x="1.2" y="6.2" width="2.1" height="1.8"/><rect x="4.2" y="6.2" width="2.1" height="1.8"/><rect x="7.2" y="6.2" width="2.1" height="1.8"/><rect x="10.2" y="6.2" width="1.8" height="1.8"/><rect x="1.2" y="8.9" width="2.1" height="1.8"/><rect x="4.2" y="8.9" width="2.1" height="1.8"/><rect x="7.2" y="8.9" width="2.1" height="1.8"/><rect x="10.2" y="8.9" width="1.8" height="1.8"/></g></svg>
<div class="a" style="left:30px;top:796px;font-weight:bold;font-size:12.5px;line-height:14px;color:#000;letter-spacing:1.0px;white-space:nowrap">09 - /home/...</div>
<svg style="left:124.0px;top:795px" width="16" height="15" viewBox="0 0 16 15"><rect x="0.5" y="0.5" width="15" height="14" rx="3" fill="#efefef" stroke="#b5b5b5" stroke-width="1"/><rect x="6.5" y="3.5" width="5" height="4" fill="none" stroke="#000" stroke-width="1.3"/><rect x="3.5" y="6.5" width="5" height="4" fill="#fff" stroke="#000" stroke-width="1.3"/></svg>
<svg style="left:143.0px;top:795px" width="16" height="15" viewBox="0 0 16 15"><rect x="0.5" y="0.5" width="15" height="14" rx="3" fill="#efefef" stroke="#b5b5b5" stroke-width="1"/><rect x="4" y="3.5" width="8" height="8" fill="none" stroke="#000" stroke-width="1.4"/><path d="M4 4.2H12" stroke="#000" stroke-width="1.6"/></svg>
<svg style="left:162.0px;top:795px" width="16" height="15" viewBox="0 0 16 15"><rect x="0.5" y="0.5" width="15" height="14" rx="3" fill="#efefef" stroke="#b5b5b5" stroke-width="1"/><path d="M4.5 4L11.5 11M11.5 4L4.5 11" stroke="#000" stroke-width="2"/></svg>
<div class="a" style="left:184px;top:792px;width:183px;height:21px;background:linear-gradient(#f7f7f7,#ececec 50%,#e2e2e2 51%,#e8e8e8);border:1px solid #bdbdbd;border-top-color:#d0d0d0;border-radius:4px 4px 0 0"></div>
<svg style="left:191px;top:797px" width="13" height="12" viewBox="0 0 13 12"><rect x="0" y="0" width="13" height="12" rx="1" fill="#111"/><rect x="0.5" y="0.5" width="12" height="2" fill="#1a3a8a"/><g fill="#fff"><rect x="1.2" y="3.5" width="2.1" height="1.8"/><rect x="4.2" y="3.5" width="2.1" height="1.8"/><rect x="7.2" y="3.5" width="2.1" height="1.8"/><rect x="10.2" y="3.5" width="1.8" height="1.8"/><rect x="1.2" y="6.2" width="2.1" height="1.8"/><rect x="4.2" y="6.2" width="2.1" height="1.8"/><rect x="7.2" y="6.2" width="2.1" height="1.8"/><rect x="10.2" y="6.2" width="1.8" height="1.8"/><rect x="1.2" y="8.9" width="2.1" height="1.8"/><rect x="4.2" y="8.9" width="2.1" height="1.8"/><rect x="7.2" y="8.9" width="2.1" height="1.8"/><rect x="10.2" y="8.9" width="1.8" height="1.8"/></g></svg>
<div class="a" style="left:214px;top:796px;font-weight:bold;font-size:12.5px;line-height:14px;color:#000;letter-spacing:1.0px;white-space:nowrap">11 - /home/...</div>
<svg style="left:308.0px;top:795px" width="16" height="15" viewBox="0 0 16 15"><rect x="0.5" y="0.5" width="15" height="14" rx="3" fill="#efefef" stroke="#b5b5b5" stroke-width="1"/><rect x="6.5" y="3.5" width="5" height="4" fill="none" stroke="#000" stroke-width="1.3"/><rect x="3.5" y="6.5" width="5" height="4" fill="#fff" stroke="#000" stroke-width="1.3"/></svg>
<svg style="left:327.0px;top:795px" width="16" height="15" viewBox="0 0 16 15"><rect x="0.5" y="0.5" width="15" height="14" rx="3" fill="#efefef" stroke="#b5b5b5" stroke-width="1"/><rect x="4" y="3.5" width="8" height="8" fill="none" stroke="#000" stroke-width="1.4"/><path d="M4 4.2H12" stroke="#000" stroke-width="1.6"/></svg>
<svg style="left:346.0px;top:795px" width="16" height="15" viewBox="0 0 16 15"><rect x="0.5" y="0.5" width="15" height="14" rx="3" fill="#efefef" stroke="#b5b5b5" stroke-width="1"/><path d="M4.5 4L11.5 11M11.5 4L4.5 11" stroke="#000" stroke-width="2"/></svg>
<div class="a" style="left:369px;top:792px;width:183px;height:21px;background:linear-gradient(#f7f7f7,#ececec 50%,#e2e2e2 51%,#e8e8e8);border:1px solid #bdbdbd;border-top-color:#d0d0d0;border-radius:4px 4px 0 0"></div>
<svg style="left:376px;top:797px" width="13" height="12" viewBox="0 0 13 12"><rect x="0" y="0" width="13" height="12" rx="1" fill="#111"/><rect x="0.5" y="0.5" width="12" height="2" fill="#1a3a8a"/><g fill="#fff"><rect x="1.2" y="3.5" width="2.1" height="1.8"/><rect x="4.2" y="3.5" width="2.1" height="1.8"/><rect x="7.2" y="3.5" width="2.1" height="1.8"/><rect x="10.2" y="3.5" width="1.8" height="1.8"/><rect x="1.2" y="6.2" width="2.1" height="1.8"/><rect x="4.2" y="6.2" width="2.1" height="1.8"/><rect x="7.2" y="6.2" width="2.1" height="1.8"/><rect x="10.2" y="6.2" width="1.8" height="1.8"/><rect x="1.2" y="8.9" width="2.1" height="1.8"/><rect x="4.2" y="8.9" width="2.1" height="1.8"/><rect x="7.2" y="8.9" width="2.1" height="1.8"/><rect x="10.2" y="8.9" width="1.8" height="1.8"/></g></svg>
<div class="a" style="left:399px;top:796px;font-weight:bold;font-size:12.5px;line-height:14px;color:#000;letter-spacing:1.0px;white-space:nowrap">10 - /home/...</div>
<svg style="left:493.0px;top:795px" width="16" height="15" viewBox="0 0 16 15"><rect x="0.5" y="0.5" width="15" height="14" rx="3" fill="#efefef" stroke="#b5b5b5" stroke-width="1"/><rect x="6.5" y="3.5" width="5" height="4" fill="none" stroke="#000" stroke-width="1.3"/><rect x="3.5" y="6.5" width="5" height="4" fill="#fff" stroke="#000" stroke-width="1.3"/></svg>
<svg style="left:512.0px;top:795px" width="16" height="15" viewBox="0 0 16 15"><rect x="0.5" y="0.5" width="15" height="14" rx="3" fill="#efefef" stroke="#b5b5b5" stroke-width="1"/><rect x="4" y="3.5" width="8" height="8" fill="none" stroke="#000" stroke-width="1.4"/><path d="M4 4.2H12" stroke="#000" stroke-width="1.6"/></svg>
<svg style="left:531.0px;top:795px" width="16" height="15" viewBox="0 0 16 15"><rect x="0.5" y="0.5" width="15" height="14" rx="3" fill="#efefef" stroke="#b5b5b5" stroke-width="1"/><path d="M4.5 4L11.5 11M11.5 4L4.5 11" stroke="#000" stroke-width="2"/></svg>
<div class="a" style="left:553px;top:792px;width:183px;height:21px;background:linear-gradient(#f7f7f7,#ececec 50%,#e2e2e2 51%,#e8e8e8);border:1px solid #bdbdbd;border-top-color:#d0d0d0;border-radius:4px 4px 0 0"></div>
<svg style="left:560px;top:797px" width="13" height="12" viewBox="0 0 13 12"><rect x="0" y="0" width="13" height="12" rx="1" fill="#111"/><rect x="0.5" y="0.5" width="12" height="2" fill="#1a3a8a"/><g fill="#fff"><rect x="1.2" y="3.5" width="2.1" height="1.8"/><rect x="4.2" y="3.5" width="2.1" height="1.8"/><rect x="7.2" y="3.5" width="2.1" height="1.8"/><rect x="10.2" y="3.5" width="1.8" height="1.8"/><rect x="1.2" y="6.2" width="2.1" height="1.8"/><rect x="4.2" y="6.2" width="2.1" height="1.8"/><rect x="7.2" y="6.2" width="2.1" height="1.8"/><rect x="10.2" y="6.2" width="1.8" height="1.8"/><rect x="1.2" y="8.9" width="2.1" height="1.8"/><rect x="4.2" y="8.9" width="2.1" height="1.8"/><rect x="7.2" y="8.9" width="2.1" height="1.8"/><rect x="10.2" y="8.9" width="1.8" height="1.8"/></g></svg>
<div class="a" style="left:583px;top:796px;font-weight:bold;font-size:12.5px;line-height:14px;color:#000;letter-spacing:1.0px;white-space:nowrap">12 - /home/...</div>
<svg style="left:677.0px;top:795px" width="16" height="15" viewBox="0 0 16 15"><rect x="0.5" y="0.5" width="15" height="14" rx="3" fill="#efefef" stroke="#b5b5b5" stroke-width="1"/><rect x="6.5" y="3.5" width="5" height="4" fill="none" stroke="#000" stroke-width="1.3"/><rect x="3.5" y="6.5" width="5" height="4" fill="#fff" stroke="#000" stroke-width="1.3"/></svg>
<svg style="left:696.0px;top:795px" width="16" height="15" viewBox="0 0 16 15"><rect x="0.5" y="0.5" width="15" height="14" rx="3" fill="#efefef" stroke="#b5b5b5" stroke-width="1"/><rect x="4" y="3.5" width="8" height="8" fill="none" stroke="#000" stroke-width="1.4"/><path d="M4 4.2H12" stroke="#000" stroke-width="1.6"/></svg>
<svg style="left:715.0px;top:795px" width="16" height="15" viewBox="0 0 16 15"><rect x="0.5" y="0.5" width="15" height="14" rx="3" fill="#efefef" stroke="#b5b5b5" stroke-width="1"/><path d="M4.5 4L11.5 11M11.5 4L4.5 11" stroke="#000" stroke-width="2"/></svg>
<div class="a" style="left:689px;top:94px;width:802px;height:30px;border-radius:8px 8px 0 0;background:#aca7a1"></div>
<div class="a" style="left:691px;top:96px;width:798px;height:698px;background:#fff;border:1px solid #707070;border-top:none;border-right:2px solid #8a8a8a;border-bottom:2px solid #6a6a6a;border-radius:6px 6px 0 0"></div>
<div class="a" style="left:691px;top:96px;width:798px;height:22px;border-radius:6px 6px 0 0;background:linear-gradient(#5badf6 0%,#56a2ef 45%,#4a8ddb 50%,#4788d5 100%);border:1px solid #2e6bb8;border-bottom:1px solid #2a5fa6"></div>
<div class="a" style="left:691px;top:100px;width:758px;text-align:center;left:691px;font-weight:bold;font-size:13px;line-height:14px;color:#fff;letter-spacing:0.6px;text-shadow:0 1px 1px #1a3a6a">Graph2</div>
<div class="a" style="left:693px;top:118px;width:2px;height:674px;background:#ececec"></div>
<svg style="left:697px;top:100px" width="14" height="14" viewBox="0 0 14 14"><rect x="0.8" y="0.8" width="12.4" height="12.4" rx="1" fill="#fff" stroke="#111" stroke-width="1.4"/><path d="M2 5L6 1.5L8.5 4.5L12 7" fill="none" stroke="#f22" stroke-width="0.9"/><path d="M2 10L6 6.5L8.5 9.5L12.5 5.5" fill="none" stroke="#22f" stroke-width="0.9"/><circle cx="6" cy="1.8" r="1" fill="#e00"/><circle cx="8.7" cy="4.6" r="1" fill="#e00"/><circle cx="6" cy="6.6" r="1" fill="#00e"/><circle cx="8.7" cy="9.6" r="1" fill="#00e"/></svg>
<svg style="left:1429px;top:99px" width="17" height="17" viewBox="0 0 16 16"><rect x="0.5" y="0.5" width="15" height="15" rx="3" fill="#5098e4" stroke="#2d66ad" stroke-width="1"/><path d="M4.5 11.5H11.5" stroke="#fff" stroke-width="2"/></svg>
<svg style="left:1448px;top:99px" width="17" height="17" viewBox="0 0 16 16"><rect x="0.5" y="0.5" width="15" height="15" rx="3" fill="#5098e4" stroke="#2d66ad" stroke-width="1"/><rect x="4.5" y="4.5" width="7" height="7" fill="none" stroke="#fff" stroke-width="1.4"/><path d="M4.5 5H11.5" stroke="#fff" stroke-width="1.5"/></svg>
<svg style="left:1466px;top:99px" width="17" height="17" viewBox="0 0 16 16"><rect x="0.5" y="0.5" width="15" height="15" rx="3" fill="#5098e4" stroke="#2d66ad" stroke-width="1"/><path d="M4.5 4.5L11.5 11.5M11.5 4.5L4.5 11.5" stroke="#fff" stroke-width="2"/></svg>
<div class="a" style="left:696px;top:120px;width:16px;height:16px;border:1px solid #c8c8c8;border-radius:3px;background:linear-gradient(#e6e6e6,#d8d8d8);font-size:12px;color:#3a3a3a;text-align:center;line-height:14px">1</div>
<svg style="left:0;top:0" width="1504" height="846" viewBox="0 0 1504 846">
<rect x="742.3" y="188.5" width="332.0" height="220.0" fill="none" stroke="#6e7276" stroke-width="1.3"/>
<path d="M742.3 188.5V408.5" stroke="#b8b8b8" stroke-width="1.2"/>
<path d="M742.3 408.5H1074.3" stroke="#222" stroke-width="1.2"/>
<path d="M735.3 408.5H742.3 M735.3 364.5H742.3 M735.3 320.5H742.3 M735.3 276.5H742.3 M735.3 232.5H742.3 M735.3 188.5H742.3 M742.3 408.5V414.0 M789.7 408.5V414.0 M837.2 408.5V414.0 M884.6 408.5V414.0 M932.0 408.5V414.0 M979.4 408.5V414.0 M1026.9 408.5V414.0 M1074.3 408.5V414.0" stroke="#222" stroke-width="1.1"/>
<path d="M738.3 399.7H742.3 M738.3 390.9H742.3 M738.3 382.1H742.3 M738.3 373.3H742.3 M738.3 355.7H742.3 M738.3 346.9H742.3 M738.3 338.1H742.3 M738.3 329.3H742.3 M738.3 311.7H742.3 M738.3 302.9H742.3 M738.3 294.1H742.3 M738.3 285.3H742.3 M738.3 267.7H742.3 M738.3 258.9H742.3 M738.3 250.1H742.3 M738.3 241.3H742.3 M738.3 223.7H742.3 M738.3 214.9H742.3 M738.3 206.1H742.3 M738.3 197.3H742.3 M751.8 408.5V412.0 M761.3 408.5V412.0 M770.8 408.5V412.0 M780.2 408.5V412.0 M799.2 408.5V412.0 M808.7 408.5V412.0 M818.2 408.5V412.0 M827.7 408.5V412.0 M846.6 408.5V412.0 M856.1 408.5V412.0 M865.6 408.5V412.0 M875.1 408.5V412.0 M894.1 408.5V412.0 M903.6 408.5V412.0 M913.0 408.5V412.0 M922.5 408.5V412.0 M941.5 408.5V412.0 M951.0 408.5V412.0 M960.5 408.5V412.0 M970.0 408.5V412.0 M988.9 408.5V412.0 M998.4 408.5V412.0 M1007.9 408.5V412.0 M1017.4 408.5V412.0 M1036.4 408.5V412.0 M1045.8 408.5V412.0 M1055.3 408.5V412.0 M1064.8 408.5V412.0" stroke="#555" stroke-width="1"/>
<text x="733.3" y="412.3" text-anchor="end" font-size="10.5" font-weight="bold" font-family="Liberation Sans" fill="#111" letter-spacing="1.1">0</text>
<text x="733.3" y="368.3" text-anchor="end" font-size="10.5" font-weight="bold" font-family="Liberation Sans" fill="#111" letter-spacing="1.1">10</text>
<text x="733.3" y="324.3" text-anchor="end" font-size="10.5" font-weight="bold" font-family="Liberation Sans" fill="#111" letter-spacing="1.1">20</text>
<text x="733.3" y="280.3" text-anchor="end" font-size="10.5" font-weight="bold" font-family="Liberation Sans" fill="#111" letter-spacing="1.1">30</text>
<text x="733.3" y="236.3" text-anchor="end" font-size="10.5" font-weight="bold" font-family="Liberation Sans" fill="#111" letter-spacing="1.1">40</text>
<text x="733.3" y="192.3" text-anchor="end" font-size="10.5" font-weight="bold" font-family="Liberation Sans" fill="#111" letter-spacing="1.1">50</text>
<text x="742.3" y="427.0" text-anchor="middle" font-size="10.5" font-weight="bold" font-family="Liberation Sans" fill="#111" letter-spacing="0.5">0</text>
<text x="789.7" y="427.0" text-anchor="middle" font-size="10.5" font-weight="bold" font-family="Liberation Sans" fill="#111" letter-spacing="0.5">500</text>
<text x="837.2" y="427.0" text-anchor="middle" font-size="10.5" font-weight="bold" font-family="Liberation Sans" fill="#111" letter-spacing="0.5">1,000</text>
<text x="884.6" y="427.0" text-anchor="middle" font-size="10.5" font-weight="bold" font-family="Liberation Sans" fill="#111" letter-spacing="0.5">1,500</text>
<text x="932.0" y="427.0" text-anchor="middle" font-size="10.5" font-weight="bold" font-family="Liberation Sans" fill="#111" letter-spacing="0.5">2,000</text>
<text x="979.4" y="427.0" text-anchor="middle" font-size="10.5" font-weight="bold" font-family="Liberation Sans" fill="#111" letter-spacing="0.5">2,500</text>
<text x="1026.9" y="427.0" text-anchor="middle" font-size="10.5" font-weight="bold" font-family="Liberation Sans" fill="#111" letter-spacing="0.5">3,000</text>
<text x="1074.3" y="427.0" text-anchor="middle" font-size="10.5" font-weight="bold" font-family="Liberation Sans" fill="#111" letter-spacing="0.5">3,500</text>
<text x="913.3" y="444.0" text-anchor="middle" font-size="14.5" font-weight="bold" font-family="Liberation Sans" fill="#111" letter-spacing="0.75">Wavenumber (cm<tspan font-size="9" dy="-5">-1</tspan><tspan dy="5">)</tspan></text>
<text transform="translate(712.3 296.5) rotate(-90)" text-anchor="middle" font-size="13.8" font-weight="bold" font-family="Liberation Sans" fill="#111" letter-spacing="1.1">Intensity (a.u.)</text>
<polyline points="838.5,406.6 838.9,406.3 839.2,406.3 839.6,406.7 840.0,405.7 840.4,405.7 840.8,405.9 841.1,405.3 841.5,405.2 841.9,405.0 842.3,405.0 842.7,404.6 843.0,404.9 843.4,404.5 843.8,404.4 844.2,403.9 844.6,403.9 844.9,403.8 845.3,403.8 845.7,403.4 846.1,403.2 846.5,403.1 846.8,402.3 847.2,402.2 847.6,403.4 848.0,402.9 848.4,402.1 848.7,402.1 849.1,401.7 849.5,401.5 849.9,400.7 850.2,401.7 850.6,401.2 851.0,400.2 851.4,400.6 851.8,400.4 852.1,400.6 852.5,400.9 852.9,400.1 853.3,399.9 853.7,400.2 854.0,399.8 854.4,399.4 854.8,399.4 855.2,398.9 855.6,398.6 855.9,398.4 856.3,398.3 856.5,397.8 856.7,397.5 857.1,397.4 857.5,397.5 857.8,396.6 858.2,396.6 858.6,395.7 859.0,396.0 859.4,394.8 859.7,394.7 860.1,394.6 860.5,393.7 860.9,393.0 861.3,392.3 861.6,392.1 861.8,391.8 862.0,391.0 862.4,390.4 862.8,389.3 863.1,388.1 863.5,387.9 863.9,386.1 864.3,384.5 864.7,383.8 865.0,382.6 865.4,380.7 865.8,379.4 866.2,377.6 866.6,376.4 866.9,374.9 867.3,372.4 867.7,370.5 868.1,367.9 868.5,366.0 868.8,364.5 869.1,362.7 869.2,361.4 869.6,358.9 870.0,356.4 870.4,353.2 870.7,350.3 871.1,348.1 871.5,346.8 871.7,346.8 871.9,347.0 872.3,347.6 872.6,348.2 873.0,350.7 873.4,351.5 873.8,353.2 874.2,355.4 874.3,355.6 874.5,356.8 874.9,358.4 875.3,361.3 875.7,363.6 876.0,366.0 876.4,368.7 876.8,371.1 877.0,372.1 877.2,371.6 877.6,373.5 877.9,374.9 878.3,375.6 878.7,376.7 879.1,377.1 879.5,377.9 879.7,378.1 879.8,378.6 880.2,378.5 880.6,379.4 881.0,379.1 881.4,379.0 881.7,380.3 882.1,380.8 882.5,379.9 882.9,379.2 883.0,380.5 883.3,380.5 883.6,379.7 884.0,379.9 884.4,379.4 884.8,378.8 885.2,377.9 885.5,377.6 885.9,376.5 886.3,375.9 886.7,375.2 887.0,374.3 887.1,374.3 887.4,372.5 887.8,370.8 888.2,368.3 888.6,364.5 888.9,361.8 889.3,358.4 889.6,355.5 889.7,354.8 890.1,349.2 890.5,341.8 890.8,334.3 891.2,328.2 891.6,323.1 891.9,322.5 892.0,322.7 892.4,324.4 892.7,327.8 893.1,331.9 893.5,338.2 893.9,342.9 894.2,347.2 894.3,347.5 894.6,351.8 895.0,357.0 895.4,362.0 895.8,366.5 896.2,371.0 896.5,375.4 896.9,378.8 897.3,383.0 897.7,387.0 898.1,390.4 898.4,393.6 898.8,396.3 899.2,398.3 899.5,399.2 899.6,400.1 900.0,400.0 900.3,401.3 900.7,402.2 901.1,402.2 901.5,402.5 901.8,403.3 902.2,403.8 902.6,404.6 903.0,403.6 903.4,404.6 903.7,405.5 904.1,405.5 904.2,405.3 904.5,405.9 904.9,405.4 905.3,405.8 905.6,405.3 906.0,405.5 906.4,406.9 906.8,406.0 907.2,406.7 907.5,405.8 907.9,406.2 908.3,406.2 908.7,406.8 909.1,405.9 909.4,405.8 909.8,407.0 910.2,406.5 910.6,406.9 911.0,406.7 911.3,407.2 911.7,406.1 912.1,407.1 912.5,406.8 912.9,406.6 913.2,407.0 913.6,406.8 914.0,406.9 914.4,406.8 914.8,407.2 915.1,406.9 915.5,406.8 915.9,406.9 916.3,406.7 916.6,406.8 917.0,406.5 917.4,406.9 917.8,406.8 918.2,407.0 918.5,406.9 918.9,407.2 919.3,406.6 919.7,407.1 920.0,407.0 920.1,406.6 920.4,406.6 920.8,406.9 921.2,407.4 921.6,406.6 922.0,406.6 922.3,407.2 922.7,406.4 923.1,406.9 923.5,407.0 923.9,406.6 924.2,406.7 924.6,406.5 925.0,407.1 925.4,405.9 925.8,406.7 926.1,407.0 926.5,406.2 926.9,406.5 927.3,406.3 927.7,406.5 928.0,406.3 928.4,406.2 928.8,406.5 929.2,406.0 929.5,406.3 929.9,406.5 930.3,406.1 930.7,405.9 931.1,406.1 931.4,406.3 931.8,405.8 932.2,406.6 932.6,406.3 933.0,405.9 933.3,406.3 933.7,405.8 934.1,405.8 934.5,405.4 934.9,406.0 935.2,405.9 935.6,405.5 936.0,406.5 936.4,404.5 936.8,405.8 937.1,405.8 937.5,405.2 937.9,405.5 938.3,406.1 938.7,405.3 939.0,405.2 939.4,405.6 939.8,405.5 940.2,405.3 940.6,405.7 940.9,405.3 941.3,405.3 941.7,405.7 942.1,405.9 942.4,405.5 942.8,405.7 943.2,405.1 943.6,405.4 944.0,405.2 944.3,405.4 944.7,405.3 945.1,405.7 945.5,405.2 945.9,404.8 946.2,405.6 946.6,405.7 947.0,405.5 947.4,405.6 947.8,405.7 948.1,405.4 948.5,405.6 948.9,405.0 949.3,405.5 949.7,405.4 950.0,405.2 950.4,405.6 950.8,405.0 951.2,405.7 951.6,405.8 951.9,405.7 952.3,405.6 952.7,406.0 953.1,405.6 953.5,406.1 953.8,405.1 954.2,405.6 954.6,405.8 955.0,405.9 955.3,405.7 955.7,405.6 956.1,405.9 956.5,405.9 956.9,405.6 957.2,405.8 957.6,405.3 958.0,405.2 958.4,405.6 958.8,405.4 959.1,406.1 959.5,405.4 959.9,405.6 960.3,405.4 960.4,405.0 960.7,406.4 961.0,405.5 961.4,406.0 961.8,405.3 962.2,406.0 962.6,405.7 962.9,405.4 963.3,405.2 963.7,405.4 964.1,405.6 964.5,405.5 964.8,404.9 965.2,405.2 965.6,405.7 966.0,404.8 966.4,404.8 966.7,404.6 967.1,405.0 967.5,404.5 967.9,405.1 968.2,404.5 968.6,404.8 969.0,404.3 969.4,404.1 969.8,404.6 970.1,404.3 970.5,404.2 970.9,403.7 971.3,403.8 971.7,404.5 972.0,403.8 972.4,403.6 972.8,403.1 973.2,404.4 973.6,403.9 973.9,403.2 974.3,404.1 974.7,404.0 975.1,403.4 975.5,403.1 975.8,403.7 976.2,403.2 976.6,403.3 977.0,402.8 977.4,403.3 977.7,402.9 978.1,403.5 978.5,403.2 978.9,403.1 979.3,402.7 979.6,402.8 980.0,403.2 980.4,402.7 980.8,402.6 981.2,402.9 981.5,402.9 981.9,402.8 982.3,403.3 982.7,402.6 983.0,402.5 983.4,402.8 983.8,402.2 984.2,402.9 984.6,402.6 984.9,402.5 985.3,401.5 985.7,402.7 986.1,401.9 986.5,401.7 986.8,401.8 987.2,401.5 987.6,402.1 988.0,402.5 988.1,401.4 988.4,402.0 988.7,401.6 989.1,401.8 989.5,400.9 989.9,400.9 990.3,401.3 990.6,400.6 991.0,400.7 991.4,400.6 991.8,400.4 992.2,400.3 992.5,399.8 992.9,399.7 993.3,399.7 993.7,399.0 994.1,399.3 994.4,398.7 994.5,398.5 994.8,397.9 995.2,398.1 995.6,396.7 995.9,396.6 996.3,395.9 996.7,395.3 997.1,394.0 997.5,393.4 997.8,392.9 998.2,392.2 998.6,391.1 999.0,390.2 999.4,388.5 999.7,387.5 1000.1,387.0 1000.5,386.9 1000.6,387.1 1000.9,387.0 1001.3,386.9 1001.6,386.9 1002.0,387.8 1002.4,388.8 1002.8,389.3 1003.2,390.1 1003.5,390.9 1003.9,391.3 1004.0,391.3 1004.3,391.2 1004.7,392.6 1005.1,393.0 1005.4,393.7 1005.8,395.1 1006.2,395.4 1006.6,396.3 1007.0,397.1 1007.2,397.0 1007.3,397.1 1007.7,397.2 1008.1,397.2 1008.5,397.1 1008.8,397.1 1009.2,397.6 1009.6,397.3 1010.0,397.8 1010.4,397.2 1010.7,397.1 1011.1,397.3 1011.5,397.3 1011.9,397.2 1012.3,397.6 1012.6,397.5 1013.0,397.2 1013.4,397.1 1013.6,397.3 1013.8,396.5 1014.2,397.4 1014.5,397.0 1014.9,396.8 1015.3,397.2 1015.7,397.3 1016.1,397.3 1016.4,396.7 1016.8,396.3 1017.2,396.4 1017.6,396.3 1018.0,396.4 1018.3,395.9 1018.7,396.7 1019.1,395.8 1019.5,395.7 1019.9,396.1 1020.2,394.8 1020.6,396.0 1021.0,395.9 1021.1,395.9 1021.4,395.1 1021.7,395.9 1022.1,395.4 1022.5,395.6 1022.9,395.8 1023.3,396.6 1023.6,396.5 1024.0,395.9 1024.4,397.2 1024.8,397.3 1025.2,397.3 1025.5,397.3 1025.9,397.7 1026.3,397.9 1026.7,398.8 1027.1,398.4 1027.4,398.8 1027.8,399.8 1028.2,399.0 1028.6,399.0 1029.0,400.3 1029.3,400.3 1029.7,400.0 1030.1,401.2 1030.5,401.6 1030.9,401.5 1031.2,401.3 1031.6,401.4 1031.7,401.0 1032.0,401.1 1032.4,401.7 1032.8,401.1 1033.1,400.7 1033.5,400.9 1033.9,401.0 1034.3,401.4 1034.6,401.1 1035.0,401.8 1035.4,401.2 1035.8,401.5 1036.2,401.1 1036.5,401.4 1036.9,401.9 1037.3,401.5 1037.7,401.2 1038.1,402.0 1038.4,401.8 1038.8,401.9 1039.2,402.2 1039.6,401.3 1040.0,401.2 1040.3,401.4 1040.7,401.7 1041.1,401.8 1041.5,401.7 1041.9,402.1 1042.2,401.6 1042.3,401.5 1042.6,401.6 1043.0,402.2 1043.4,402.0 1043.8,402.2 1044.1,401.6 1044.5,402.2 1044.9,403.0 1045.3,402.3 1045.7,401.9 1046.0,402.4 1046.4,402.4 1046.8,402.8 1047.2,403.7 1047.6,403.7 1047.9,403.7 1048.3,403.4 1048.7,403.4 1049.1,403.4 1049.4,404.0 1049.8,403.8 1050.2,404.5 1050.6,404.9 1051.0,404.7 1051.3,405.6 1051.7,406.5 1052.1,406.1 1052.5,405.8 1052.9,407.1 1053.0,406.1 1053.2,406.1 1053.6,406.6 1054.0,406.6 1054.4,406.3 1054.8,406.4 1055.1,405.8 1055.5,406.1 1055.9,406.8 1056.3,406.6 1056.7,406.1 1057.0,405.7 1057.4,406.3 1057.8,406.3 1058.2,405.8 1058.6,406.5 1058.9,406.6 1059.3,407.1 1059.7,406.8 1060.1,405.9 1060.5,407.1 1060.8,406.7 1061.2,407.2 1061.6,406.7 1062.0,406.4 1062.3,406.8 1062.7,406.5 1063.1,406.5 1063.5,406.6 1063.9,406.2 1064.2,406.6 1064.6,407.0 1065.0,407.1 1065.4,407.2 1065.8,406.7 1066.1,407.0 1066.5,406.0 1066.9,406.3 1067.3,407.0 1067.7,407.1 1068.0,406.4 1068.4,407.6 1068.8,407.1 1069.2,406.6 1069.6,407.3 1069.9,407.2 1070.3,407.1 1070.7,406.8 1071.1,406.9 1071.5,406.9 1071.8,406.8 1072.2,407.0 1072.6,406.6 1073.0,407.3 1073.2,407.5" fill="none" stroke="#000" stroke-width="1.7" stroke-linejoin="round"/>
<rect x="934.5" y="212.5" width="109" height="24" rx="1" fill="#fff" stroke="#707070" stroke-width="1.3"/>
<path d="M941.5 224.3H955.5" stroke="#000" stroke-width="1.7"/>
<text x="962.5" y="229.2" font-size="12" font-weight="bold" font-family="Liberation Sans" fill="#111" letter-spacing="0.75">rGO - 700˚C</text>
<rect x="1135.8" y="188.5" width="331.60000000000014" height="219.89999999999998" fill="none" stroke="#6e7276" stroke-width="1.3"/>
<path d="M1135.8 188.5V408.4" stroke="#b8b8b8" stroke-width="1.2"/>
<path d="M1135.8 408.4H1467.4" stroke="#222" stroke-width="1.2"/>
<path d="M1128.8 408.4H1135.8 M1128.8 364.4H1135.8 M1128.8 320.4H1135.8 M1128.8 276.5H1135.8 M1128.8 232.5H1135.8 M1128.8 188.5H1135.8 M1135.8 408.4V413.9 M1183.2 408.4V413.9 M1230.5 408.4V413.9 M1277.9 408.4V413.9 M1325.3 408.4V413.9 M1372.7 408.4V413.9 M1420.0 408.4V413.9 M1467.4 408.4V413.9" stroke="#222" stroke-width="1.1"/>
<path d="M1131.8 399.6H1135.8 M1131.8 390.8H1135.8 M1131.8 382.0H1135.8 M1131.8 373.2H1135.8 M1131.8 355.6H1135.8 M1131.8 346.8H1135.8 M1131.8 338.0H1135.8 M1131.8 329.2H1135.8 M1131.8 311.6H1135.8 M1131.8 302.8H1135.8 M1131.8 294.1H1135.8 M1131.8 285.3H1135.8 M1131.8 267.7H1135.8 M1131.8 258.9H1135.8 M1131.8 250.1H1135.8 M1131.8 241.3H1135.8 M1131.8 223.7H1135.8 M1131.8 214.9H1135.8 M1131.8 206.1H1135.8 M1131.8 197.3H1135.8 M1145.3 408.4V411.9 M1154.7 408.4V411.9 M1164.2 408.4V411.9 M1173.7 408.4V411.9 M1192.6 408.4V411.9 M1202.1 408.4V411.9 M1211.6 408.4V411.9 M1221.1 408.4V411.9 M1240.0 408.4V411.9 M1249.5 408.4V411.9 M1259.0 408.4V411.9 M1268.4 408.4V411.9 M1287.4 408.4V411.9 M1296.9 408.4V411.9 M1306.3 408.4V411.9 M1315.8 408.4V411.9 M1334.8 408.4V411.9 M1344.2 408.4V411.9 M1353.7 408.4V411.9 M1363.2 408.4V411.9 M1382.1 408.4V411.9 M1391.6 408.4V411.9 M1401.1 408.4V411.9 M1410.6 408.4V411.9 M1429.5 408.4V411.9 M1439.0 408.4V411.9 M1448.5 408.4V411.9 M1457.9 408.4V411.9" stroke="#555" stroke-width="1"/>
<text x="1126.8" y="412.2" text-anchor="end" font-size="10.5" font-weight="bold" font-family="Liberation Sans" fill="#111" letter-spacing="1.1">0</text>
<text x="1126.8" y="368.2" text-anchor="end" font-size="10.5" font-weight="bold" font-family="Liberation Sans" fill="#111" letter-spacing="1.1">10</text>
<text x="1126.8" y="324.2" text-anchor="end" font-size="10.5" font-weight="bold" font-family="Liberation Sans" fill="#111" letter-spacing="1.1">20</text>
<text x="1126.8" y="280.3" text-anchor="end" font-size="10.5" font-weight="bold" font-family="Liberation Sans" fill="#111" letter-spacing="1.1">30</text>
<text x="1126.8" y="236.3" text-anchor="end" font-size="10.5" font-weight="bold" font-family="Liberation Sans" fill="#111" letter-spacing="1.1">40</text>
<text x="1126.8" y="192.3" text-anchor="end" font-size="10.5" font-weight="bold" font-family="Liberation Sans" fill="#111" letter-spacing="1.1">50</text>
<text x="1135.8" y="426.9" text-anchor="middle" font-size="10.5" font-weight="bold" font-family="Liberation Sans" fill="#111" letter-spacing="0.5">0</text>
<text x="1183.2" y="426.9" text-anchor="middle" font-size="10.5" font-weight="bold" font-family="Liberation Sans" fill="#111" letter-spacing="0.5">500</text>
<text x="1230.5" y="426.9" text-anchor="middle" font-size="10.5" font-weight="bold" font-family="Liberation Sans" fill="#111" letter-spacing="0.5">1,000</text>
<text x="1277.9" y="426.9" text-anchor="middle" font-size="10.5" font-weight="bold" font-family="Liberation Sans" fill="#111" letter-spacing="0.5">1,500</text>
<text x="1325.3" y="426.9" text-anchor="middle" font-size="10.5" font-weight="bold" font-family="Liberation Sans" fill="#111" letter-spacing="0.5">2,000</text>
<text x="1372.7" y="426.9" text-anchor="middle" font-size="10.5" font-weight="bold" font-family="Liberation Sans" fill="#111" letter-spacing="0.5">2,500</text>
<text x="1420.0" y="426.9" text-anchor="middle" font-size="10.5" font-weight="bold" font-family="Liberation Sans" fill="#111" letter-spacing="0.5">3,000</text>
<text x="1467.4" y="426.9" text-anchor="middle" font-size="10.5" font-weight="bold" font-family="Liberation Sans" fill="#111" letter-spacing="0.5">3,500</text>
<text x="1306.6" y="443.9" text-anchor="middle" font-size="14.5" font-weight="bold" font-family="Liberation Sans" fill="#111" letter-spacing="0.75">Wavenumber (cm<tspan font-size="9" dy="-5">-1</tspan><tspan dy="5">)</tspan></text>
<text transform="translate(1105.8 296.4) rotate(-90)" text-anchor="middle" font-size="13.8" font-weight="bold" font-family="Liberation Sans" fill="#111" letter-spacing="1.1">Intensity (a.u.)</text>
<polyline points="1163.8,406.6 1164.2,406.8 1164.6,406.7 1165.0,407.2 1165.4,406.1 1165.7,406.3 1166.1,406.6 1166.5,406.3 1166.9,406.4 1167.3,406.6 1167.6,406.2 1168.0,406.6 1168.4,406.5 1168.8,406.7 1169.1,406.3 1169.5,406.4 1169.9,406.3 1170.3,406.5 1170.7,406.3 1171.0,406.6 1171.4,406.1 1171.8,406.3 1172.2,406.2 1172.6,406.2 1172.9,406.6 1173.3,406.1 1173.7,405.7 1174.1,406.7 1174.5,406.7 1174.8,406.6 1175.2,406.0 1175.6,406.2 1176.0,405.9 1176.3,406.0 1176.7,406.1 1177.1,406.1 1177.5,406.2 1177.9,405.9 1178.2,406.4 1178.6,406.2 1179.0,406.0 1179.4,405.6 1179.8,406.3 1180.1,406.3 1180.5,406.2 1180.9,405.8 1181.3,406.1 1181.7,405.6 1182.0,406.5 1182.4,405.7 1182.8,405.7 1183.2,406.3 1183.6,405.9 1183.9,405.6 1184.3,405.9 1184.7,405.6 1185.1,405.3 1185.4,405.8 1185.8,405.9 1186.2,406.1 1186.6,405.7 1187.0,405.9 1187.3,405.9 1187.7,405.8 1188.1,405.6 1188.5,406.1 1188.9,406.2 1189.2,406.4 1189.6,405.4 1190.0,405.7 1190.4,405.3 1190.8,405.7 1191.1,405.9 1191.5,405.6 1191.9,405.7 1192.3,406.0 1192.6,405.9 1193.0,405.2 1193.4,405.6 1193.8,405.6 1194.2,405.7 1194.5,405.8 1194.9,405.4 1195.3,405.7 1195.7,405.8 1196.1,405.7 1196.4,405.9 1196.8,405.6 1197.2,405.3 1197.6,405.8 1198.0,405.2 1198.3,405.7 1198.7,405.1 1199.1,404.3 1199.5,402.9 1199.8,401.8 1200.2,401.5 1200.6,402.0 1201.0,403.0 1201.4,404.3 1201.7,405.5 1202.1,405.6 1202.5,405.4 1202.9,405.3 1203.3,405.4 1203.6,404.9 1204.0,405.5 1204.4,405.7 1204.8,405.0 1205.2,405.8 1205.5,405.3 1205.9,405.8 1206.3,405.4 1206.7,406.1 1207.0,405.3 1207.4,405.6 1207.8,405.8 1208.2,405.1 1208.6,405.3 1208.9,405.5 1209.3,405.7 1209.7,405.5 1210.1,405.6 1210.5,405.3 1210.8,405.3 1211.2,405.7 1211.6,405.7 1212.0,405.7 1212.4,405.9 1212.7,405.7 1213.1,405.5 1213.5,405.3 1213.9,405.2 1214.2,405.7 1214.6,405.3 1215.0,405.6 1215.4,404.9 1215.8,405.5 1216.1,405.3 1216.5,405.7 1216.9,405.7 1217.3,405.4 1217.7,405.6 1218.0,405.4 1218.4,405.9 1218.8,405.3 1219.2,405.7 1219.6,405.0 1219.9,405.5 1220.3,405.1 1220.7,405.8 1221.1,405.3 1221.4,405.7 1221.8,405.5 1222.2,405.4 1222.3,405.5 1222.6,405.3 1223.0,405.2 1223.3,405.1 1223.7,405.3 1224.1,405.5 1224.5,405.3 1224.9,405.0 1225.2,405.4 1225.6,404.4 1226.0,404.5 1226.4,404.4 1226.8,403.9 1227.1,403.7 1227.5,403.7 1227.9,403.8 1228.3,403.2 1228.6,403.0 1229.0,403.1 1229.4,402.3 1229.8,402.2 1230.2,402.6 1230.5,401.8 1230.9,402.0 1231.3,401.1 1231.7,401.0 1232.1,401.2 1232.4,400.9 1232.8,400.5 1233.2,400.3 1233.3,399.8 1233.6,399.9 1234.0,399.9 1234.3,399.5 1234.7,400.0 1235.1,399.1 1235.5,398.8 1235.8,398.9 1236.2,398.8 1236.6,398.2 1237.0,397.6 1237.4,397.9 1237.7,398.0 1238.1,397.1 1238.5,397.7 1238.9,396.8 1239.3,396.9 1239.6,396.2 1240.0,396.4 1240.4,395.6 1240.8,395.5 1241.2,395.8 1241.5,395.5 1241.9,394.8 1242.3,394.0 1242.7,394.0 1243.0,393.6 1243.4,393.4 1243.8,392.7 1244.2,392.4 1244.6,392.0 1244.9,391.9 1245.3,390.9 1245.7,390.4 1246.1,390.6 1246.5,389.2 1246.8,389.1 1247.2,388.9 1247.6,388.7 1248.0,387.4 1248.4,386.9 1248.7,386.6 1249.1,386.3 1249.5,384.8 1249.9,384.6 1250.2,383.9 1250.6,382.3 1251.0,381.8 1251.4,381.3 1251.8,380.9 1252.1,379.8 1252.5,379.7 1252.9,378.3 1253.3,377.6 1253.6,377.1 1253.7,376.9 1254.0,375.4 1254.4,374.5 1254.8,373.3 1255.2,371.9 1255.6,371.0 1255.9,369.8 1256.3,368.4 1256.7,366.5 1257.1,364.6 1257.4,363.1 1257.8,361.1 1258.2,359.7 1258.6,357.5 1259.0,355.5 1259.3,353.5 1259.7,350.4 1259.8,350.1 1260.1,348.6 1260.5,345.4 1260.9,341.4 1261.2,337.8 1261.6,333.2 1262.0,329.7 1262.4,325.9 1262.8,323.1 1262.9,322.3 1263.1,320.7 1263.5,318.3 1263.9,315.7 1264.3,313.4 1264.7,311.4 1265.0,309.9 1265.4,308.7 1265.6,308.8 1265.8,309.2 1266.2,309.7 1266.5,311.5 1266.9,312.9 1267.3,315.4 1267.7,318.3 1268.1,320.2 1268.3,322.0 1268.4,323.5 1268.8,325.7 1269.2,328.9 1269.6,332.9 1270.0,336.3 1270.3,339.8 1270.7,342.6 1271.1,345.3 1271.5,346.6 1271.9,348.8 1272.2,349.8 1272.6,351.5 1273.0,352.7 1273.4,354.3 1273.7,355.6 1274.1,356.3 1274.5,356.8 1274.9,357.2 1275.3,358.0 1275.6,358.4 1276.0,358.9 1276.1,358.3 1276.4,358.3 1276.8,358.5 1277.2,357.9 1277.5,357.5 1277.9,356.0 1278.3,355.3 1278.7,354.3 1279.1,352.9 1279.4,351.5 1279.8,350.2 1280.2,348.8 1280.6,347.1 1280.9,346.0 1280.9,344.9 1281.3,341.8 1281.7,339.2 1282.1,334.3 1282.5,329.4 1282.8,324.8 1283.2,319.6 1283.6,315.4 1284.0,310.9 1284.4,307.5 1284.7,303.2 1285.1,299.2 1285.5,296.6 1285.9,295.5 1286.0,295.1 1286.3,295.1 1286.6,296.9 1287.0,299.4 1287.4,303.3 1287.8,307.1 1288.1,311.7 1288.5,317.0 1288.9,321.8 1289.3,327.6 1289.5,330.4 1289.7,333.4 1290.0,339.9 1290.4,348.6 1290.8,357.0 1291.2,365.1 1291.6,371.0 1291.7,373.3 1291.9,375.5 1292.3,378.8 1292.7,381.8 1293.1,385.3 1293.5,387.2 1293.8,389.7 1294.2,391.8 1294.6,393.9 1295.0,395.3 1295.3,396.8 1295.6,397.1 1295.7,397.4 1296.1,397.9 1296.5,398.7 1296.9,399.1 1297.2,399.5 1297.6,400.7 1298.0,400.6 1298.4,401.9 1298.8,402.4 1299.1,402.3 1299.5,402.6 1299.9,402.9 1300.3,403.7 1300.7,403.6 1301.0,403.8 1301.4,403.8 1301.8,404.3 1302.2,404.4 1302.5,404.9 1302.9,404.8 1303.3,405.0 1303.4,404.7 1303.7,405.2 1304.1,405.2 1304.4,404.9 1304.8,404.7 1305.2,405.1 1305.6,405.2 1306.0,405.4 1306.3,405.1 1306.7,405.3 1307.1,405.1 1307.5,405.5 1307.9,405.9 1308.2,405.8 1308.6,406.0 1309.0,406.1 1309.4,405.5 1309.7,405.7 1310.1,406.2 1310.5,405.5 1310.9,405.9 1311.3,406.3 1311.6,406.0 1312.0,406.1 1312.4,406.3 1312.8,406.7 1313.2,406.2 1313.5,406.2 1313.9,406.9 1314.3,406.1 1314.7,406.1 1315.1,406.4 1315.4,406.3 1315.8,406.4 1316.2,406.6 1316.6,406.5 1316.9,406.0 1317.3,406.8 1317.7,406.3 1318.1,406.4 1318.5,406.6 1318.8,406.5 1319.0,406.8 1319.2,406.6 1319.6,406.4 1320.0,406.3 1320.4,406.6 1320.7,405.5 1321.1,406.4 1321.5,406.2 1321.9,406.3 1322.3,406.3 1322.6,405.7 1323.0,406.1 1323.4,405.6 1323.8,405.6 1324.1,406.1 1324.5,405.5 1324.9,405.8 1325.3,404.9 1325.7,405.6 1326.0,405.7 1326.4,405.8 1326.8,405.6 1327.2,405.3 1327.6,405.4 1327.9,405.4 1328.3,405.2 1328.7,405.0 1329.1,404.5 1329.5,405.2 1329.8,404.9 1330.2,405.0 1330.6,405.1 1331.0,405.0 1331.2,404.9 1331.3,404.4 1331.7,404.6 1332.1,404.7 1332.5,404.4 1332.9,404.4 1333.2,404.6 1333.6,404.4 1334.0,404.7 1334.4,404.3 1334.8,404.3 1335.1,404.5 1335.5,404.7 1335.9,404.0 1336.3,404.3 1336.7,403.5 1337.0,404.5 1337.4,404.1 1337.8,404.4 1338.2,404.2 1338.5,404.0 1338.9,404.5 1339.3,404.3 1339.7,404.2 1340.1,404.2 1340.4,404.0 1340.8,403.9 1341.2,404.0 1341.6,404.1 1342.0,404.2 1342.3,404.4 1342.7,404.3 1343.1,404.3 1343.5,403.9 1343.9,404.2 1344.2,404.4 1344.6,403.9 1345.0,404.3 1345.4,404.2 1345.8,404.1 1346.1,403.9 1346.5,404.6 1346.9,404.3 1347.3,403.9 1347.6,404.1 1348.0,404.2 1348.4,404.1 1348.8,403.6 1349.2,404.0 1349.5,403.7 1349.9,403.7 1350.3,404.0 1350.7,403.7 1351.1,404.0 1351.4,404.0 1351.8,404.1 1352.2,403.6 1352.4,403.9 1352.6,403.9 1353.0,404.1 1353.3,403.3 1353.7,403.5 1354.1,403.7 1354.5,403.9 1354.8,404.1 1355.2,403.6 1355.6,403.6 1356.0,404.0 1356.4,403.3 1356.7,403.4 1357.1,403.8 1357.5,403.7 1357.9,403.6 1358.3,403.5 1358.6,403.5 1359.0,403.9 1359.4,403.1 1359.8,403.4 1360.2,403.1 1360.5,403.1 1360.9,403.4 1361.3,403.3 1361.7,403.1 1362.0,403.1 1362.4,403.3 1362.8,403.4 1363.2,403.2 1363.6,403.4 1363.9,403.3 1364.3,403.7 1364.7,403.1 1365.1,403.4 1365.5,403.2 1365.8,403.1 1366.2,402.9 1366.6,402.5 1367.0,402.9 1367.4,403.3 1367.7,402.8 1368.1,403.0 1368.3,402.7 1368.5,403.0 1368.9,402.9 1369.2,402.8 1369.6,402.8 1370.0,403.1 1370.4,402.7 1370.8,402.4 1371.1,402.0 1371.5,402.4 1371.9,402.3 1372.3,402.0 1372.7,401.9 1373.0,401.5 1373.4,401.7 1373.8,401.7 1374.2,401.2 1374.6,401.1 1374.9,401.5 1375.3,401.2 1375.7,401.6 1376.1,401.1 1376.4,401.1 1376.8,400.8 1377.2,400.8 1377.6,400.6 1378.0,400.4 1378.3,400.1 1378.7,400.1 1378.9,400.2 1379.1,400.4 1379.5,399.6 1379.9,399.3 1380.2,399.7 1380.6,399.2 1381.0,399.6 1381.4,399.4 1381.8,398.8 1382.1,398.1 1382.5,398.5 1382.9,398.2 1383.3,397.3 1383.6,398.0 1384.0,397.1 1384.4,396.9 1384.8,396.8 1385.2,396.5 1385.5,395.6 1385.9,396.3 1386.3,395.9 1386.7,395.6 1387.1,395.5 1387.4,395.5 1387.8,394.5 1388.2,394.7 1388.6,395.1 1389.0,394.6 1389.3,394.2 1389.7,394.1 1390.1,394.5 1390.5,394.0 1390.8,393.9 1391.2,393.8 1391.6,393.8 1392.0,394.4 1392.4,393.4 1392.7,393.8 1393.1,393.4 1393.5,393.2 1393.9,394.0 1394.3,394.3 1394.6,393.7 1395.0,394.0 1395.4,394.1 1395.8,394.3 1396.2,393.6 1396.5,394.2 1396.9,394.5 1397.3,394.2 1397.7,394.5 1398.0,394.1 1398.4,394.3 1398.8,394.5 1399.2,394.1 1399.6,394.4 1399.9,394.1 1400.3,394.0 1400.7,394.4 1401.1,394.5 1401.5,394.3 1401.8,394.1 1402.2,394.3 1402.3,394.3 1402.6,394.3 1403.0,394.2 1403.4,394.1 1403.7,394.4 1404.1,394.2 1404.5,394.0 1404.9,394.0 1405.2,393.7 1405.6,393.4 1406.0,393.4 1406.4,393.4 1406.8,393.3 1407.1,392.5 1407.5,392.5 1407.9,392.8 1408.3,392.6 1408.7,391.7 1409.0,391.6 1409.4,391.8 1409.8,391.3 1410.2,391.9 1410.6,391.3 1410.9,391.0 1411.3,391.5 1411.7,391.1 1412.1,390.6 1412.4,390.4 1412.8,390.8 1413.2,390.5 1413.6,390.1 1414.0,390.6 1414.1,390.9 1414.3,390.5 1414.7,390.7 1415.1,390.5 1415.5,391.0 1415.9,391.5 1416.2,391.0 1416.6,392.1 1417.0,392.3 1417.4,392.7 1417.8,393.1 1418.1,393.7 1418.5,394.0 1418.9,394.6 1419.3,395.3 1419.6,395.4 1420.0,395.7 1420.3,396.0 1420.4,395.9 1420.8,396.4 1421.2,396.2 1421.5,396.4 1421.9,397.7 1422.3,397.5 1422.7,397.9 1423.1,398.7 1423.4,398.2 1423.8,398.8 1424.2,398.9 1424.6,399.3 1425.0,399.0 1425.3,399.2 1425.7,399.6 1426.1,399.7 1426.5,400.0 1426.8,400.1 1426.9,400.3 1427.2,400.2 1427.6,400.5 1428.0,400.3 1428.4,400.2 1428.7,400.4 1429.1,400.3 1429.5,399.9 1429.9,401.2 1430.3,400.7 1430.6,400.9 1431.0,400.9 1431.4,401.2 1431.8,400.9 1432.2,401.0 1432.5,401.1 1432.9,401.1 1433.3,401.2 1433.7,401.7 1434.1,400.8 1434.4,401.3 1434.8,401.5 1435.2,401.2 1435.6,401.5 1435.9,402.0 1436.3,401.2 1436.7,402.0 1437.1,401.7 1437.4,401.7 1437.5,401.4 1437.8,401.5 1438.2,402.0 1438.6,402.4 1439.0,402.5 1439.4,402.4 1439.7,402.5 1440.1,403.1 1440.5,403.6 1440.9,403.5 1441.3,404.2 1441.6,404.4 1442.0,404.7 1442.4,404.7 1442.8,405.1 1443.1,405.1 1443.5,405.2 1443.9,405.6 1444.3,406.5 1444.7,406.4 1444.9,406.0 1445.0,406.1 1445.4,405.6 1445.8,406.2 1446.2,406.3 1446.6,406.0 1446.9,406.1 1447.3,406.5 1447.7,406.3 1448.1,406.8 1448.5,406.8 1448.8,406.3 1449.2,407.0 1449.6,406.4 1450.0,406.5 1450.3,406.6 1450.7,406.6 1451.1,406.7 1451.5,407.4 1451.9,407.2 1452.2,407.1 1452.6,406.7 1453.0,407.3 1453.4,407.2 1453.8,407.1 1454.1,406.7 1454.5,407.5 1454.9,407.5 1455.3,407.0 1455.7,407.7 1456.0,407.1 1456.4,407.3 1456.8,407.6 1457.2,407.3 1457.5,407.5 1457.9,407.2 1458.3,407.2 1458.6,406.9 1458.7,407.3 1459.1,407.3 1459.4,407.5 1459.8,407.4 1460.2,407.1 1460.6,407.9 1461.0,407.2 1461.3,407.6 1461.7,407.4 1462.1,407.4 1462.5,407.2 1462.9,407.4 1463.2,407.6 1463.6,407.4 1464.0,407.5 1464.4,407.6 1464.7,407.4 1465.1,407.3 1465.5,407.5 1465.9,407.5 1466.1,407.9" fill="none" stroke="#f00" stroke-width="1.7" stroke-linejoin="round"/>
<rect x="1284.5" y="195" width="55" height="23" rx="1" fill="#fff" stroke="#707070" stroke-width="1.3"/>
<path d="M1291.5 206.8H1305.5" stroke="#f00" stroke-width="1.7"/>
<text x="1312.5" y="211.7" font-size="12" font-weight="bold" font-family="Liberation Sans" fill="#111" letter-spacing="0.3">S22</text>
<rect x="742.3" y="480.5" width="331.29999999999995" height="220.0" fill="none" stroke="#6e7276" stroke-width="1.3"/>
<path d="M742.3 480.5V700.5" stroke="#b8b8b8" stroke-width="1.2"/>
<path d="M742.3 700.5H1073.6" stroke="#222" stroke-width="1.2"/>
<path d="M735.3 700.5H742.3 M735.3 656.5H742.3 M735.3 612.5H742.3 M735.3 568.5H742.3 M735.3 524.5H742.3 M735.3 480.5H742.3 M742.3 700.5V706.0 M789.6 700.5V706.0 M837.0 700.5V706.0 M884.3 700.5V706.0 M931.6 700.5V706.0 M978.9 700.5V706.0 M1026.3 700.5V706.0 M1073.6 700.5V706.0" stroke="#222" stroke-width="1.1"/>
<path d="M738.3 691.7H742.3 M738.3 682.9H742.3 M738.3 674.1H742.3 M738.3 665.3H742.3 M738.3 647.7H742.3 M738.3 638.9H742.3 M738.3 630.1H742.3 M738.3 621.3H742.3 M738.3 603.7H742.3 M738.3 594.9H742.3 M738.3 586.1H742.3 M738.3 577.3H742.3 M738.3 559.7H742.3 M738.3 550.9H742.3 M738.3 542.1H742.3 M738.3 533.3H742.3 M738.3 515.7H742.3 M738.3 506.9H742.3 M738.3 498.1H742.3 M738.3 489.3H742.3 M751.8 700.5V704.0 M761.2 700.5V704.0 M770.7 700.5V704.0 M780.2 700.5V704.0 M799.1 700.5V704.0 M808.6 700.5V704.0 M818.0 700.5V704.0 M827.5 700.5V704.0 M846.4 700.5V704.0 M855.9 700.5V704.0 M865.4 700.5V704.0 M874.8 700.5V704.0 M893.8 700.5V704.0 M903.2 700.5V704.0 M912.7 700.5V704.0 M922.1 700.5V704.0 M941.1 700.5V704.0 M950.5 700.5V704.0 M960.0 700.5V704.0 M969.5 700.5V704.0 M988.4 700.5V704.0 M997.9 700.5V704.0 M1007.3 700.5V704.0 M1016.8 700.5V704.0 M1035.7 700.5V704.0 M1045.2 700.5V704.0 M1054.7 700.5V704.0 M1064.1 700.5V704.0" stroke="#555" stroke-width="1"/>
<text x="733.3" y="704.3" text-anchor="end" font-size="10.5" font-weight="bold" font-family="Liberation Sans" fill="#111" letter-spacing="1.1">0</text>
<text x="733.3" y="660.3" text-anchor="end" font-size="10.5" font-weight="bold" font-family="Liberation Sans" fill="#111" letter-spacing="1.1">10</text>
<text x="733.3" y="616.3" text-anchor="end" font-size="10.5" font-weight="bold" font-family="Liberation Sans" fill="#111" letter-spacing="1.1">20</text>
<text x="733.3" y="572.3" text-anchor="end" font-size="10.5" font-weight="bold" font-family="Liberation Sans" fill="#111" letter-spacing="1.1">30</text>
<text x="733.3" y="528.3" text-anchor="end" font-size="10.5" font-weight="bold" font-family="Liberation Sans" fill="#111" letter-spacing="1.1">40</text>
<text x="733.3" y="484.3" text-anchor="end" font-size="10.5" font-weight="bold" font-family="Liberation Sans" fill="#111" letter-spacing="1.1">50</text>
<text x="742.3" y="719.0" text-anchor="middle" font-size="10.5" font-weight="bold" font-family="Liberation Sans" fill="#111" letter-spacing="0.5">0</text>
<text x="789.6" y="719.0" text-anchor="middle" font-size="10.5" font-weight="bold" font-family="Liberation Sans" fill="#111" letter-spacing="0.5">500</text>
<text x="837.0" y="719.0" text-anchor="middle" font-size="10.5" font-weight="bold" font-family="Liberation Sans" fill="#111" letter-spacing="0.5">1,000</text>
<text x="884.3" y="719.0" text-anchor="middle" font-size="10.5" font-weight="bold" font-family="Liberation Sans" fill="#111" letter-spacing="0.5">1,500</text>
<text x="931.6" y="719.0" text-anchor="middle" font-size="10.5" font-weight="bold" font-family="Liberation Sans" fill="#111" letter-spacing="0.5">2,000</text>
<text x="978.9" y="719.0" text-anchor="middle" font-size="10.5" font-weight="bold" font-family="Liberation Sans" fill="#111" letter-spacing="0.5">2,500</text>
<text x="1026.3" y="719.0" text-anchor="middle" font-size="10.5" font-weight="bold" font-family="Liberation Sans" fill="#111" letter-spacing="0.5">3,000</text>
<text x="1073.6" y="719.0" text-anchor="middle" font-size="10.5" font-weight="bold" font-family="Liberation Sans" fill="#111" letter-spacing="0.5">3,500</text>
<text x="912.9" y="736.0" text-anchor="middle" font-size="14.5" font-weight="bold" font-family="Liberation Sans" fill="#111" letter-spacing="0.75">Wavenumber (cm<tspan font-size="9" dy="-5">-1</tspan><tspan dy="5">)</tspan></text>
<text transform="translate(712.3 588.5) rotate(-90)" text-anchor="middle" font-size="13.8" font-weight="bold" font-family="Liberation Sans" fill="#111" letter-spacing="1.1">Intensity (a.u.)</text>
<polyline points="756.2,683.5 756.6,686.6 757.0,686.3 757.4,687.7 757.7,688.6 758.1,689.4 758.5,690.9 758.9,690.8 759.0,691.2 759.2,689.8 759.6,691.7 760.0,692.5 760.4,693.0 760.8,693.7 761.1,694.2 761.5,694.2 761.9,694.1 762.3,694.4 762.7,693.9 763.0,694.3 763.4,694.0 763.8,693.0 764.2,693.1 764.5,693.2 764.9,692.5 765.1,691.9 765.3,690.8 765.7,689.9 766.0,687.4 766.1,684.2 766.4,662.7 766.5,660.6 766.8,672.5 767.1,687.0 767.2,688.5 767.6,692.0 767.9,694.7 768.0,693.2 768.3,694.7 768.7,695.5 769.1,695.0 769.5,695.1 769.8,695.9 770.2,696.4 770.6,696.0 770.7,696.1 771.0,695.6 771.4,696.1 771.7,696.5 772.1,696.2 772.5,696.9 772.9,697.4 773.3,696.8 773.6,696.9 774.0,697.4 774.4,697.7 774.8,697.4 775.1,698.6 775.5,697.3 775.9,697.4 776.2,698.4 776.3,697.7 776.7,698.2 777.0,697.4 777.4,698.7 777.8,698.2 778.2,697.6 778.6,697.4 778.9,698.9 779.3,698.2 779.7,697.8 780.1,698.3 780.4,697.3 780.8,698.6 781.2,697.9 781.6,698.6 782.0,697.5 782.3,698.1 782.7,698.3 783.1,698.9 783.5,697.4 783.9,697.9 784.2,697.9 784.6,697.7 785.0,698.1 785.4,698.5 785.7,698.6 785.9,698.6 786.1,697.6 786.5,698.7 786.9,698.1 787.3,697.6 787.6,689.3 787.9,684.1 788.0,685.6 788.4,695.6 788.6,697.4 788.8,696.9 789.2,697.1 789.5,697.3 789.9,697.4 790.3,697.1 790.7,697.3 791.0,696.7 791.4,697.4 791.5,696.9 791.8,697.0 792.2,696.6 792.6,696.6 792.9,695.5 793.3,695.8 793.7,695.6 794.1,697.0 794.5,696.0 794.8,695.9 795.2,695.1 795.6,696.0 795.7,694.4 796.0,694.1 796.3,694.5 796.7,693.4 797.1,691.9 797.5,689.5 797.9,671.6 798.2,645.6 798.4,641.8 798.6,647.3 799.0,676.4 799.3,688.7 799.4,689.7 799.8,691.1 800.1,693.3 800.5,693.7 800.9,694.2 801.0,693.2 801.3,693.6 801.7,694.0 802.0,694.0 802.4,693.5 802.8,694.0 803.2,693.9 803.5,693.1 803.9,692.1 804.3,693.0 804.7,692.9 804.8,693.1 805.1,689.9 805.4,678.5 805.8,667.1 806.2,662.2 806.6,667.3 807.0,678.6 807.3,688.9 807.6,692.8 807.7,692.4 808.1,692.2 808.5,692.7 808.8,692.7 809.2,692.9 809.6,692.7 810.0,692.2 810.4,692.8 810.5,692.6 810.7,691.9 811.1,690.8 811.5,688.7 811.9,688.4 812.3,685.4 812.6,684.9 812.9,684.3 813.0,684.1 813.4,686.4 813.8,690.0 814.1,692.8 814.2,692.3 814.5,692.9 814.9,691.7 815.3,689.8 815.7,688.8 816.0,686.2 816.4,686.0 816.5,685.5 816.8,687.2 817.2,689.8 817.6,692.4 817.9,693.9 818.0,694.6 818.3,694.0 818.7,693.7 819.1,692.1 819.4,692.0 819.8,686.9 820.2,680.3 820.6,674.6 820.8,673.5 821.0,674.6 821.3,679.7 821.7,686.9 822.1,693.2 822.3,694.1 822.5,693.8 822.9,694.8 823.2,695.2 823.6,695.6 824.0,696.4 824.4,695.5 824.7,696.8 825.1,695.8 825.5,696.1 825.6,695.6 825.9,696.1 826.3,696.4 826.6,695.8 827.0,696.0 827.4,695.7 827.8,695.4 828.2,695.3 828.5,695.0 828.9,695.1 829.3,694.5 829.7,695.1 830.0,693.9 830.4,694.1 830.8,692.7 831.2,692.4 831.6,693.5 831.9,692.3 832.2,692.2 832.3,692.5 832.7,691.6 833.1,691.8 833.5,692.2 833.8,691.4 834.2,691.1 834.6,690.7 835.0,691.0 835.3,689.7 835.7,689.2 836.0,689.6 836.1,689.1 836.5,685.8 836.9,682.0 837.2,678.3 837.3,678.8 837.6,680.3 838.0,683.0 838.4,685.6 838.7,685.4 838.8,686.4 839.1,683.9 839.5,680.6 839.8,679.8 839.9,678.8 840.3,680.4 840.6,680.6 841.0,681.9 841.4,682.7 841.8,684.5 842.2,683.9 842.5,685.1 842.6,685.1 842.9,685.4 843.3,684.9 843.7,683.6 844.1,682.3 844.4,680.9 844.8,679.0 845.0,678.2 845.2,675.8 845.6,663.4 845.9,650.9 846.2,647.3 846.3,647.1 846.7,650.8 847.1,657.7 847.5,663.6 847.6,664.1 847.8,666.0 848.2,670.0 848.6,672.8 849.0,675.1 849.4,676.1 849.7,678.0 850.1,676.7 850.5,675.6 850.9,675.4 851.3,673.1 851.6,672.1 852.0,671.2 852.1,670.5 852.4,670.0 852.8,667.5 853.1,664.2 853.5,663.5 853.9,661.1 854.1,661.8 854.3,661.4 854.7,662.0 855.0,663.4 855.4,663.2 855.8,663.4 856.2,664.6 856.6,665.3 856.9,665.0 857.3,665.8 857.7,666.5 857.8,666.0 858.1,665.3 858.4,665.5 858.8,664.3 859.2,663.2 859.6,662.8 860.0,662.1 860.3,660.8 860.7,658.6 861.1,656.5 861.5,655.0 861.9,653.0 862.2,651.5 862.3,650.6 862.6,649.2 863.0,646.1 863.4,642.9 863.7,638.8 864.1,633.8 864.4,630.6 864.5,629.3 864.9,622.5 865.3,616.2 865.6,608.9 865.7,608.6 866.0,605.6 866.4,601.4 866.5,601.3 866.8,603.7 867.2,607.9 867.4,610.6 867.5,611.0 867.9,597.3 868.3,582.2 868.5,576.6 868.7,575.0 869.0,570.3 869.4,564.7 869.8,561.9 870.2,557.9 870.6,554.4 870.9,552.7 871.3,551.0 871.7,549.9 872.1,549.2 872.5,550.1 872.8,549.9 873.2,550.7 873.6,550.8 874.0,553.2 874.3,554.7 874.7,555.5 874.8,556.4 875.1,557.8 875.5,561.6 875.9,566.3 876.2,573.0 876.6,579.2 877.0,586.6 877.4,591.8 877.7,594.7 877.8,596.9 878.1,602.2 878.5,608.3 878.9,613.3 879.3,618.9 879.6,624.0 880.0,626.4 880.4,628.2 880.5,628.0 880.8,628.6 881.2,627.3 881.5,627.6 881.9,627.3 882.3,626.9 882.7,626.0 883.1,624.7 883.4,624.2 883.8,622.6 884.1,621.9 884.2,621.3 884.6,619.7 884.9,617.4 885.3,614.4 885.7,608.3 886.0,603.4 886.1,601.1 886.5,578.9 886.8,547.5 887.1,524.7 887.2,517.2 887.6,484.7 887.7,483.1 888.0,502.6 888.4,546.2 888.5,551.0 888.7,558.7 889.1,566.4 889.3,567.9 889.5,565.8 889.9,557.6 890.2,545.1 890.6,532.0 890.9,524.0 891.0,522.1 891.4,512.3 891.8,503.7 892.1,496.1 892.4,494.9 892.5,494.2 892.9,497.4 893.3,499.3 893.7,503.6 894.0,509.3 894.4,514.6 894.8,522.8 895.2,535.4 895.5,551.2 895.9,567.7 896.3,583.9 896.7,599.1 897.1,612.1 897.2,614.7 897.4,621.8 897.8,631.2 898.2,641.7 898.6,651.0 899.0,658.9 899.3,667.0 899.7,673.2 900.1,677.9 900.5,681.1 900.8,682.9 900.9,682.3 901.2,684.1 901.6,683.6 902.0,685.0 902.4,685.2 902.7,684.7 903.1,685.5 903.5,686.0 903.8,686.2 903.9,685.9 904.3,686.6 904.6,687.0 905.0,687.0 905.4,688.3 905.8,688.6 906.2,689.1 906.5,688.7 906.9,689.1 907.3,689.2 907.7,690.0 908.0,690.3 908.4,690.1 908.8,690.9 909.2,690.6 909.6,690.9 909.9,691.7 910.3,691.6 910.7,691.7 911.1,691.0 911.5,690.8 911.8,692.0 912.2,692.0 912.6,693.0 913.0,692.0 913.3,692.1 913.7,692.6 914.1,691.8 914.5,692.8 914.9,692.2 915.2,692.1 915.6,692.7 916.0,691.8 916.4,691.7 916.8,692.8 917.1,692.8 917.5,692.0 917.9,692.3 918.3,692.8 918.6,692.4 919.0,692.3 919.4,692.3 919.8,691.9 920.2,692.1 920.5,691.5 920.9,691.7 921.3,692.0 921.7,691.8 922.1,691.7 922.4,692.0 922.8,692.9 923.2,691.9 923.6,692.3 923.9,691.6 924.1,692.3 924.3,692.1 924.7,692.2 925.1,691.5 925.5,692.2 925.8,692.3 926.2,692.0 926.6,692.3 927.0,691.9 927.4,691.9 927.7,691.7 928.1,690.9 928.5,691.8 928.9,691.5 929.2,691.5 929.6,691.0 930.0,691.7 930.4,691.4 930.8,691.0 931.1,690.6 931.5,690.8 931.9,690.9 932.3,690.9 932.7,690.2 933.0,689.7 933.4,690.1 933.8,690.0 934.2,689.8 934.5,690.3 934.9,690.0 935.3,689.9 935.7,689.6 936.1,689.7 936.2,690.2 936.4,689.1 936.8,688.8 937.2,689.6 937.6,689.3 938.0,689.3 938.3,689.0 938.7,689.9 939.1,688.5 939.5,689.4 939.8,688.6 940.2,689.0 940.6,689.2 941.0,689.0 941.4,688.5 941.7,689.3 942.1,689.0 942.5,689.0 942.9,689.5 943.3,688.1 943.6,688.4 944.0,688.6 944.4,688.1 944.8,689.0 945.2,688.6 945.5,687.8 945.9,688.1 946.3,689.5 946.7,689.9 947.0,688.9 947.4,688.0 947.8,688.7 948.1,688.5 948.2,688.2 948.6,688.8 948.9,688.4 949.3,688.1 949.7,688.3 950.1,688.4 950.5,688.8 950.8,688.4 951.2,688.8 951.6,688.1 952.0,687.6 952.3,689.1 952.7,689.8 953.1,689.1 953.5,688.8 953.9,688.6 954.1,688.6 954.2,689.4 954.6,689.5 955.0,688.7 955.4,689.8 955.8,688.9 956.1,689.6 956.5,689.3 956.9,689.4 957.3,689.5 957.6,689.7 958.0,690.6 958.4,690.1 958.8,690.4 959.2,690.4 959.5,690.1 959.9,690.9 960.3,691.2 960.7,691.2 961.1,691.1 961.4,690.7 961.8,691.5 962.2,690.6 962.5,691.0 962.6,691.2 962.9,691.7 963.3,691.0 963.7,690.8 964.1,691.9 964.5,690.6 964.8,690.4 965.2,690.9 965.6,690.9 966.0,690.0 966.4,690.5 966.7,691.5 967.1,691.1 967.5,691.1 967.9,691.1 968.2,692.0 968.6,690.7 969.0,691.2 969.4,690.9 969.8,691.0 970.1,690.5 970.5,691.0 970.9,691.2 971.3,690.6 971.7,690.2 972.0,691.0 972.4,690.2 972.8,690.7 973.2,691.0 973.5,690.0 973.9,691.0 974.3,690.2 974.7,690.8 975.1,690.3 975.4,691.0 975.8,690.8 976.2,689.9 976.6,690.2 977.0,690.2 977.3,690.3 977.7,689.9 978.1,690.6 978.5,690.4 978.8,689.9 979.2,690.1 979.6,690.0 980.0,689.6 980.4,689.5 980.7,689.5 981.1,688.6 981.5,688.7 981.9,688.5 982.3,689.0 982.6,689.1 983.0,689.4 983.4,688.8 983.8,689.4 984.1,688.7 984.1,688.1 984.5,687.6 984.9,687.7 985.3,688.3 985.7,687.6 986.0,687.9 986.4,687.0 986.8,687.2 987.2,686.5 987.6,685.5 987.9,685.9 988.3,685.1 988.7,685.7 989.1,685.6 989.4,684.6 989.8,684.1 990.2,684.8 990.6,684.2 991.0,684.6 991.3,683.7 991.7,682.9 992.1,683.0 992.5,682.9 992.9,683.0 993.2,681.9 993.6,681.4 994.0,681.2 994.4,681.1 994.8,681.4 995.1,679.8 995.5,680.4 995.9,680.2 996.0,679.7 996.3,680.8 996.6,679.6 997.0,679.4 997.4,678.8 997.8,678.1 998.2,678.2 998.5,678.9 998.9,678.0 999.3,677.5 999.7,677.2 1000.1,677.6 1000.4,677.6 1000.8,676.5 1001.2,676.4 1001.6,676.5 1001.9,677.2 1002.3,675.7 1002.7,677.9 1003.1,676.9 1003.5,676.0 1003.8,677.1 1004.2,677.2 1004.6,678.0 1005.0,677.2 1005.4,678.6 1005.7,678.2 1006.1,678.5 1006.5,679.2 1006.9,678.6 1007.2,679.8 1007.6,679.6 1008.0,679.4 1008.4,679.6 1008.6,679.3 1008.8,679.1 1009.1,679.6 1009.5,679.6 1009.9,679.5 1010.3,679.3 1010.7,678.7 1011.0,679.0 1011.4,678.5 1011.8,678.5 1012.2,678.6 1012.5,677.7 1012.9,678.3 1013.3,677.6 1013.7,676.7 1014.1,677.6 1014.4,676.9 1014.8,677.3 1015.2,676.6 1015.6,676.8 1016.0,676.0 1016.3,675.9 1016.7,675.4 1017.1,674.5 1017.5,674.9 1017.8,674.6 1018.2,674.8 1018.6,674.7 1019.0,674.9 1019.4,675.3 1019.7,674.4 1019.9,673.7 1020.1,674.2 1020.5,674.7 1020.9,673.9 1021.3,674.9 1021.6,675.2 1022.0,675.7 1022.4,675.8 1022.8,675.7 1023.1,675.0 1023.5,676.3 1023.9,677.0 1024.3,677.1 1024.7,677.3 1025.0,678.2 1025.4,677.8 1025.8,677.8 1026.0,678.1 1026.2,678.2 1026.6,679.4 1026.9,680.0 1027.3,679.1 1027.7,679.7 1028.1,681.3 1028.4,681.0 1028.8,681.6 1029.2,681.9 1029.6,682.6 1030.0,683.3 1030.3,683.5 1030.7,683.9 1031.1,684.3 1031.5,685.4 1031.9,686.2 1032.2,685.4 1032.6,685.9 1033.0,685.2 1033.4,685.2 1033.7,685.5 1034.1,685.9 1034.5,685.8 1034.9,685.4 1035.3,686.4 1035.6,685.7 1036.0,685.9 1036.4,686.2 1036.8,685.8 1037.2,686.8 1037.5,686.2 1037.9,687.1 1038.3,687.1 1038.7,687.3 1039.1,686.7 1039.4,687.5 1039.8,687.1 1040.2,687.8 1040.6,687.0 1040.9,686.8 1041.3,687.6 1041.5,687.1 1041.7,687.7 1042.1,687.2 1042.5,688.4 1042.8,689.4 1043.2,688.4 1043.6,689.4 1044.0,690.2 1044.4,690.4 1044.7,691.3 1045.1,691.1 1045.5,691.9 1045.9,691.2 1046.2,692.0 1046.6,693.5 1047.0,693.9 1047.4,693.9 1047.8,694.9 1048.1,694.5 1048.5,694.9 1048.9,695.6 1049.3,695.8 1049.7,695.7 1050.0,695.5 1050.4,695.7 1050.8,696.6 1051.1,696.3 1051.2,697.1 1051.5,696.7 1051.9,697.4 1052.3,696.8 1052.7,697.8 1053.1,697.8 1053.4,697.6 1053.8,697.4 1054.2,698.4 1054.6,698.2 1055.0,698.0 1055.3,698.1 1055.7,698.6 1056.1,698.3 1056.5,698.6 1056.8,698.0 1057.2,698.5 1057.6,699.4 1058.0,699.9 1058.4,699.0 1058.7,698.6 1059.1,699.1 1059.5,698.9 1059.9,699.6 1060.3,700.0 1060.6,699.2 1061.0,699.6 1061.4,699.4 1061.8,700.3 1062.1,699.7 1062.5,700.1 1062.9,699.6 1063.3,700.2 1063.7,700.3 1064.0,700.3 1064.4,699.5 1064.8,700.1 1065.2,700.5 1065.6,700.6 1065.9,700.7 1066.3,699.6 1066.7,701.1 1067.1,700.6 1067.4,700.0 1067.8,699.8" fill="none" stroke="#8c8c92" stroke-width="1.5" stroke-linejoin="round"/>
<rect x="905.3" y="483.7" width="49" height="22" rx="1" fill="#fff" stroke="#707070" stroke-width="1.3"/>
<path d="M912.3 495.5H926.3" stroke="#999" stroke-width="1.7"/>
<text x="933.3" y="500.4" font-size="12" font-weight="bold" font-family="Liberation Sans" fill="#111" letter-spacing="0.1">S21</text>
<rect x="1135.6" y="480.5" width="332.4000000000001" height="220.0" fill="none" stroke="#6e7276" stroke-width="1.3"/>
<path d="M1135.6 480.5V700.5" stroke="#b8b8b8" stroke-width="1.2"/>
<path d="M1135.6 700.5H1468" stroke="#222" stroke-width="1.2"/>
<path d="M1128.6 700.5H1135.6 M1128.6 656.5H1135.6 M1128.6 612.5H1135.6 M1128.6 568.5H1135.6 M1128.6 524.5H1135.6 M1128.6 480.5H1135.6 M1135.6 700.5V706.0 M1183.1 700.5V706.0 M1230.6 700.5V706.0 M1278.1 700.5V706.0 M1325.5 700.5V706.0 M1373.0 700.5V706.0 M1420.5 700.5V706.0 M1468.0 700.5V706.0" stroke="#222" stroke-width="1.1"/>
<path d="M1131.6 691.7H1135.6 M1131.6 682.9H1135.6 M1131.6 674.1H1135.6 M1131.6 665.3H1135.6 M1131.6 647.7H1135.6 M1131.6 638.9H1135.6 M1131.6 630.1H1135.6 M1131.6 621.3H1135.6 M1131.6 603.7H1135.6 M1131.6 594.9H1135.6 M1131.6 586.1H1135.6 M1131.6 577.3H1135.6 M1131.6 559.7H1135.6 M1131.6 550.9H1135.6 M1131.6 542.1H1135.6 M1131.6 533.3H1135.6 M1131.6 515.7H1135.6 M1131.6 506.9H1135.6 M1131.6 498.1H1135.6 M1131.6 489.3H1135.6 M1145.1 700.5V704.0 M1154.6 700.5V704.0 M1164.1 700.5V704.0 M1173.6 700.5V704.0 M1192.6 700.5V704.0 M1202.1 700.5V704.0 M1211.6 700.5V704.0 M1221.1 700.5V704.0 M1240.1 700.5V704.0 M1249.6 700.5V704.0 M1259.1 700.5V704.0 M1268.6 700.5V704.0 M1287.6 700.5V704.0 M1297.1 700.5V704.0 M1306.5 700.5V704.0 M1316.0 700.5V704.0 M1335.0 700.5V704.0 M1344.5 700.5V704.0 M1354.0 700.5V704.0 M1363.5 700.5V704.0 M1382.5 700.5V704.0 M1392.0 700.5V704.0 M1401.5 700.5V704.0 M1411.0 700.5V704.0 M1430.0 700.5V704.0 M1439.5 700.5V704.0 M1449.0 700.5V704.0 M1458.5 700.5V704.0" stroke="#555" stroke-width="1"/>
<text x="1126.6" y="704.3" text-anchor="end" font-size="10.5" font-weight="bold" font-family="Liberation Sans" fill="#111" letter-spacing="1.1">0</text>
<text x="1126.6" y="660.3" text-anchor="end" font-size="10.5" font-weight="bold" font-family="Liberation Sans" fill="#111" letter-spacing="1.1">10</text>
<text x="1126.6" y="616.3" text-anchor="end" font-size="10.5" font-weight="bold" font-family="Liberation Sans" fill="#111" letter-spacing="1.1">20</text>
<text x="1126.6" y="572.3" text-anchor="end" font-size="10.5" font-weight="bold" font-family="Liberation Sans" fill="#111" letter-spacing="1.1">30</text>
<text x="1126.6" y="528.3" text-anchor="end" font-size="10.5" font-weight="bold" font-family="Liberation Sans" fill="#111" letter-spacing="1.1">40</text>
<text x="1126.6" y="484.3" text-anchor="end" font-size="10.5" font-weight="bold" font-family="Liberation Sans" fill="#111" letter-spacing="1.1">50</text>
<text x="1135.6" y="719.0" text-anchor="middle" font-size="10.5" font-weight="bold" font-family="Liberation Sans" fill="#111" letter-spacing="0.5">0</text>
<text x="1183.1" y="719.0" text-anchor="middle" font-size="10.5" font-weight="bold" font-family="Liberation Sans" fill="#111" letter-spacing="0.5">500</text>
<text x="1230.6" y="719.0" text-anchor="middle" font-size="10.5" font-weight="bold" font-family="Liberation Sans" fill="#111" letter-spacing="0.5">1,000</text>
<text x="1278.1" y="719.0" text-anchor="middle" font-size="10.5" font-weight="bold" font-family="Liberation Sans" fill="#111" letter-spacing="0.5">1,500</text>
<text x="1325.5" y="719.0" text-anchor="middle" font-size="10.5" font-weight="bold" font-family="Liberation Sans" fill="#111" letter-spacing="0.5">2,000</text>
<text x="1373.0" y="719.0" text-anchor="middle" font-size="10.5" font-weight="bold" font-family="Liberation Sans" fill="#111" letter-spacing="0.5">2,500</text>
<text x="1420.5" y="719.0" text-anchor="middle" font-size="10.5" font-weight="bold" font-family="Liberation Sans" fill="#111" letter-spacing="0.5">3,000</text>
<text x="1468.0" y="719.0" text-anchor="middle" font-size="10.5" font-weight="bold" font-family="Liberation Sans" fill="#111" letter-spacing="0.5">3,500</text>
<text x="1306.8" y="736.0" text-anchor="middle" font-size="14.5" font-weight="bold" font-family="Liberation Sans" fill="#111" letter-spacing="0.75">Wavenumber (cm<tspan font-size="9" dy="-5">-1</tspan><tspan dy="5">)</tspan></text>
<text transform="translate(1105.6 588.5) rotate(-90)" text-anchor="middle" font-size="13.8" font-weight="bold" font-family="Liberation Sans" fill="#111" letter-spacing="1.1">Intensity (a.u.)</text>
<polyline points="1149.6,683.5 1149.9,686.6 1150.3,686.3 1150.7,687.7 1151.1,688.6 1151.5,689.4 1151.8,690.9 1152.2,690.8 1152.3,691.2 1152.6,689.8 1153.0,691.7 1153.4,692.5 1153.7,693.0 1154.1,693.7 1154.5,694.2 1154.9,694.2 1155.3,694.1 1155.6,694.4 1156.0,693.9 1156.4,694.3 1156.8,694.0 1157.2,693.0 1157.5,693.1 1157.9,693.2 1158.3,692.5 1158.5,691.9 1158.7,690.8 1159.1,689.9 1159.3,687.4 1159.4,684.2 1159.8,662.7 1159.9,660.6 1160.2,672.5 1160.5,687.0 1160.6,688.5 1161.0,692.0 1161.2,694.7 1161.3,693.2 1161.7,694.7 1162.1,695.5 1162.5,695.0 1162.9,695.1 1163.2,695.9 1163.6,696.4 1164.0,696.0 1164.1,696.1 1164.4,695.6 1164.8,696.1 1165.1,696.5 1165.5,696.2 1165.9,696.9 1166.3,697.4 1166.7,696.8 1167.0,696.9 1167.4,697.4 1167.8,697.7 1168.2,697.4 1168.6,698.6 1168.9,697.3 1169.3,697.4 1169.6,698.4 1169.7,697.7 1170.1,698.2 1170.5,697.4 1170.8,698.7 1171.2,698.2 1171.6,697.6 1172.0,697.4 1172.4,698.9 1172.7,698.2 1173.1,697.8 1173.5,698.3 1173.9,697.3 1174.3,698.6 1174.6,697.9 1175.0,698.6 1175.4,697.5 1175.8,698.1 1176.2,698.3 1176.5,698.9 1176.9,697.4 1177.3,697.9 1177.7,697.9 1178.1,697.7 1178.4,698.1 1178.8,698.5 1179.2,698.6 1179.4,698.6 1179.6,697.6 1180.0,698.7 1180.3,698.1 1180.7,697.6 1181.1,689.3 1181.4,684.1 1181.5,685.6 1181.9,695.6 1182.0,697.4 1182.2,696.9 1182.6,697.1 1183.0,697.3 1183.4,697.4 1183.8,697.1 1184.1,697.3 1184.5,696.7 1184.9,697.4 1185.0,696.9 1185.3,697.0 1185.6,696.6 1186.0,696.6 1186.4,695.5 1186.8,695.8 1187.2,695.6 1187.5,697.0 1187.9,696.0 1188.3,695.9 1188.7,695.1 1189.1,696.0 1189.2,694.4 1189.4,694.1 1189.8,694.5 1190.2,693.4 1190.6,691.9 1191.0,689.5 1191.3,671.6 1191.7,645.6 1191.9,641.8 1192.1,647.3 1192.5,676.4 1192.8,688.7 1192.9,689.7 1193.2,691.1 1193.6,693.3 1194.0,693.7 1194.4,694.2 1194.5,693.2 1194.8,693.6 1195.1,694.0 1195.5,694.0 1195.9,693.5 1196.3,694.0 1196.7,693.9 1197.0,693.1 1197.4,692.1 1197.8,693.0 1198.2,692.9 1198.3,693.1 1198.6,689.9 1198.9,678.5 1199.3,667.1 1199.7,662.2 1200.1,667.3 1200.5,678.6 1200.8,688.9 1201.1,692.8 1201.2,692.4 1201.6,692.2 1202.0,692.7 1202.4,692.7 1202.7,692.9 1203.1,692.7 1203.5,692.2 1203.9,692.8 1204.0,692.6 1204.3,691.9 1204.6,690.8 1205.0,688.7 1205.4,688.4 1205.8,685.4 1206.2,684.9 1206.4,684.3 1206.5,684.1 1206.9,686.4 1207.3,690.0 1207.7,692.8 1207.8,692.3 1208.1,692.9 1208.4,691.7 1208.8,689.8 1209.2,688.8 1209.6,686.2 1210.0,686.0 1210.1,685.5 1210.3,687.2 1210.7,689.8 1211.1,692.4 1211.5,693.9 1211.6,694.6 1211.9,694.0 1212.2,693.7 1212.6,692.1 1213.0,692.0 1213.4,686.9 1213.8,680.3 1214.1,674.6 1214.3,673.5 1214.5,674.6 1214.9,679.7 1215.3,686.9 1215.7,693.2 1215.9,694.1 1216.0,693.8 1216.4,694.8 1216.8,695.2 1217.2,695.6 1217.6,696.4 1217.9,695.5 1218.3,696.8 1218.7,695.8 1219.1,696.1 1219.2,695.6 1219.5,696.1 1219.8,696.4 1220.2,695.8 1220.6,696.0 1221.0,695.7 1221.4,695.4 1221.7,695.3 1222.1,695.0 1222.5,695.1 1222.9,694.5 1223.3,695.1 1223.6,693.9 1224.0,694.1 1224.4,692.7 1224.8,692.4 1225.2,693.5 1225.5,692.3 1225.8,692.2 1225.9,692.5 1226.3,691.6 1226.7,691.8 1227.1,692.2 1227.4,691.4 1227.8,691.1 1228.2,690.7 1228.6,691.0 1229.0,689.7 1229.3,689.2 1229.6,689.6 1229.7,689.1 1230.1,685.8 1230.5,682.0 1230.9,678.3 1231.0,678.8 1231.2,680.3 1231.6,683.0 1232.0,685.6 1232.3,685.4 1232.4,686.4 1232.8,683.9 1233.1,680.6 1233.4,679.8 1233.5,678.8 1233.9,680.4 1234.3,680.6 1234.7,681.9 1235.0,682.7 1235.4,684.5 1235.8,683.9 1236.2,685.1 1236.3,685.1 1236.6,685.4 1236.9,684.9 1237.3,683.6 1237.7,682.3 1238.1,680.9 1238.5,679.0 1238.6,678.2 1238.8,675.8 1239.2,663.4 1239.6,650.9 1239.9,647.3 1240.0,647.1 1240.4,650.8 1240.7,657.7 1241.1,663.6 1241.2,664.1 1241.5,666.0 1241.9,670.0 1242.3,672.8 1242.6,675.1 1243.0,676.1 1243.4,678.0 1243.8,676.7 1244.2,675.6 1244.5,675.4 1244.9,673.1 1245.3,672.1 1245.7,671.2 1245.8,670.5 1246.1,670.0 1246.4,667.5 1246.8,664.2 1247.2,663.5 1247.6,661.1 1247.8,661.8 1248.0,661.4 1248.3,662.0 1248.7,663.4 1249.1,663.2 1249.5,663.4 1249.9,664.6 1250.2,665.3 1250.6,665.0 1251.0,665.8 1251.4,666.5 1251.5,666.0 1251.8,665.3 1252.1,665.5 1252.5,664.3 1252.9,663.2 1253.3,662.8 1253.6,662.1 1254.0,660.8 1254.4,658.6 1254.8,656.5 1255.2,655.0 1255.5,653.0 1255.9,651.5 1256.0,650.6 1256.3,649.2 1256.7,646.1 1257.1,642.9 1257.4,638.8 1257.8,633.8 1258.1,630.6 1258.2,629.3 1258.6,622.5 1259.0,616.2 1259.3,608.9 1259.4,608.6 1259.7,605.6 1260.1,601.4 1260.2,601.3 1260.5,603.7 1260.9,607.9 1261.2,610.6 1261.2,611.0 1261.6,597.3 1262.0,582.2 1262.2,576.6 1262.4,575.0 1262.8,570.3 1263.1,564.7 1263.5,561.9 1263.9,557.9 1264.3,554.4 1264.7,552.7 1265.0,551.0 1265.4,549.9 1265.8,549.2 1266.2,550.1 1266.6,549.9 1266.9,550.7 1267.3,550.8 1267.7,553.2 1268.1,554.7 1268.5,555.5 1268.6,556.4 1268.8,557.8 1269.2,561.6 1269.6,566.3 1270.0,573.0 1270.4,579.2 1270.7,586.6 1271.1,591.8 1271.4,594.7 1271.5,596.9 1271.9,602.2 1272.3,608.3 1272.6,613.3 1273.0,618.9 1273.4,624.0 1273.8,626.4 1274.2,628.2 1274.3,628.0 1274.5,628.6 1274.9,627.3 1275.3,627.6 1275.7,627.3 1276.1,626.9 1276.4,626.0 1276.8,624.7 1277.2,624.2 1277.6,622.6 1277.9,621.9 1278.0,621.3 1278.3,619.7 1278.7,617.4 1279.1,614.4 1279.5,608.3 1279.8,603.4 1279.9,601.1 1280.2,578.9 1280.6,547.5 1280.9,524.7 1281.0,517.2 1281.4,484.7 1281.5,483.1 1281.8,502.6 1282.1,546.2 1282.2,551.0 1282.5,558.7 1282.9,566.4 1283.1,567.9 1283.3,565.8 1283.7,557.6 1284.0,545.1 1284.4,532.0 1284.7,524.0 1284.8,522.1 1285.2,512.3 1285.6,503.7 1285.9,496.1 1286.2,494.9 1286.3,494.2 1286.7,497.4 1287.1,499.3 1287.5,503.6 1287.8,509.3 1288.2,514.6 1288.6,522.8 1289.0,535.4 1289.4,551.2 1289.7,567.7 1290.1,583.9 1290.5,599.1 1290.9,612.1 1291.0,614.7 1291.3,621.8 1291.6,631.2 1292.0,641.7 1292.4,651.0 1292.8,658.9 1293.2,667.0 1293.5,673.2 1293.9,677.9 1294.3,681.1 1294.6,682.9 1294.7,682.3 1295.1,684.1 1295.4,683.6 1295.8,685.0 1296.2,685.2 1296.6,684.7 1297.0,685.5 1297.3,686.0 1297.6,686.2 1297.7,685.9 1298.1,686.6 1298.5,687.0 1298.9,687.0 1299.2,688.3 1299.6,688.6 1300.0,689.1 1300.4,688.7 1300.8,689.1 1301.1,689.2 1301.5,690.0 1301.9,690.3 1302.3,690.1 1302.7,690.9 1303.0,690.6 1303.4,690.9 1303.8,691.7 1304.2,691.6 1304.6,691.7 1304.9,691.0 1305.3,690.8 1305.7,692.0 1306.1,692.0 1306.5,693.0 1306.8,692.0 1307.2,692.1 1307.6,692.6 1308.0,691.8 1308.4,692.8 1308.7,692.2 1309.1,692.1 1309.5,692.7 1309.9,691.8 1310.3,691.7 1310.6,692.8 1311.0,692.8 1311.4,692.0 1311.8,692.3 1312.2,692.8 1312.5,692.4 1312.9,692.3 1313.3,692.3 1313.7,691.9 1314.1,692.1 1314.4,691.5 1314.8,691.7 1315.2,692.0 1315.6,691.8 1316.0,691.7 1316.3,692.0 1316.7,692.9 1317.1,691.9 1317.5,692.3 1317.9,691.6 1318.0,692.3 1318.2,692.1 1318.6,692.2 1319.0,691.5 1319.4,692.2 1319.7,692.3 1320.1,692.0 1320.5,692.3 1320.9,691.9 1321.3,691.9 1321.6,691.7 1322.0,690.9 1322.4,691.8 1322.8,691.5 1323.2,691.5 1323.5,691.0 1323.9,691.7 1324.3,691.4 1324.7,691.0 1325.1,690.6 1325.4,690.8 1325.8,690.9 1326.2,690.9 1326.6,690.2 1327.0,689.7 1327.3,690.1 1327.7,690.0 1328.1,689.8 1328.5,690.3 1328.9,690.0 1329.2,689.9 1329.6,689.6 1330.0,689.7 1330.1,690.2 1330.4,689.1 1330.8,688.8 1331.1,689.6 1331.5,689.3 1331.9,689.3 1332.3,689.0 1332.7,689.9 1333.0,688.5 1333.4,689.4 1333.8,688.6 1334.2,689.0 1334.6,689.2 1334.9,689.0 1335.3,688.5 1335.7,689.3 1336.1,689.0 1336.5,689.0 1336.8,689.5 1337.2,688.1 1337.6,688.4 1338.0,688.6 1338.4,688.1 1338.7,689.0 1339.1,688.6 1339.5,687.8 1339.9,688.1 1340.3,689.5 1340.6,689.9 1341.0,688.9 1341.4,688.0 1341.8,688.7 1342.1,688.5 1342.2,688.2 1342.5,688.8 1342.9,688.4 1343.3,688.1 1343.7,688.3 1344.1,688.4 1344.4,688.8 1344.8,688.4 1345.2,688.8 1345.6,688.1 1346.0,687.6 1346.3,689.1 1346.7,689.8 1347.1,689.1 1347.5,688.8 1347.9,688.6 1348.1,688.6 1348.2,689.4 1348.6,689.5 1349.0,688.7 1349.4,689.8 1349.8,688.9 1350.1,689.6 1350.5,689.3 1350.9,689.4 1351.3,689.5 1351.7,689.7 1352.0,690.6 1352.4,690.1 1352.8,690.4 1353.2,690.4 1353.6,690.1 1353.9,690.9 1354.3,691.2 1354.7,691.2 1355.1,691.1 1355.5,690.7 1355.8,691.5 1356.2,690.6 1356.5,691.0 1356.6,691.2 1357.0,691.7 1357.4,691.0 1357.7,690.8 1358.1,691.9 1358.5,690.6 1358.9,690.4 1359.3,690.9 1359.6,690.9 1360.0,690.0 1360.4,690.5 1360.8,691.5 1361.2,691.1 1361.5,691.1 1361.9,691.1 1362.3,692.0 1362.7,690.7 1363.1,691.2 1363.4,690.9 1363.8,691.0 1364.2,690.5 1364.6,691.0 1365.0,691.2 1365.3,690.6 1365.7,690.2 1366.1,691.0 1366.5,690.2 1366.9,690.7 1367.2,691.0 1367.6,690.0 1368.0,691.0 1368.4,690.2 1368.8,690.8 1369.1,690.3 1369.5,691.0 1369.9,690.8 1370.3,689.9 1370.7,690.2 1371.0,690.2 1371.4,690.3 1371.8,689.9 1372.2,690.6 1372.6,690.4 1372.9,689.9 1373.3,690.1 1373.7,690.0 1374.1,689.6 1374.5,689.5 1374.8,689.5 1375.2,688.6 1375.6,688.7 1376.0,688.5 1376.4,689.0 1376.7,689.1 1377.1,689.4 1377.5,688.8 1377.9,689.4 1378.2,688.7 1378.3,688.1 1378.6,687.6 1379.0,687.7 1379.4,688.3 1379.8,687.6 1380.2,687.9 1380.5,687.0 1380.9,687.2 1381.3,686.5 1381.7,685.5 1382.1,685.9 1382.4,685.1 1382.8,685.7 1383.2,685.6 1383.6,684.6 1384.0,684.1 1384.3,684.8 1384.7,684.2 1385.1,684.6 1385.5,683.7 1385.8,682.9 1386.2,683.0 1386.6,682.9 1387.0,683.0 1387.4,681.9 1387.7,681.4 1388.1,681.2 1388.5,681.1 1388.9,681.4 1389.3,679.8 1389.6,680.4 1390.0,680.2 1390.1,679.7 1390.4,680.8 1390.8,679.6 1391.2,679.4 1391.5,678.8 1391.9,678.1 1392.3,678.2 1392.7,678.9 1393.1,678.0 1393.4,677.5 1393.8,677.2 1394.2,677.6 1394.6,677.6 1395.0,676.5 1395.3,676.4 1395.7,676.5 1396.1,677.2 1396.5,675.7 1396.9,677.9 1397.2,676.9 1397.6,676.0 1398.0,677.1 1398.4,677.2 1398.8,678.0 1399.1,677.2 1399.5,678.6 1399.9,678.2 1400.3,678.5 1400.7,679.2 1401.0,678.6 1401.4,679.8 1401.8,679.6 1402.2,679.4 1402.6,679.6 1402.8,679.3 1402.9,679.1 1403.3,679.6 1403.7,679.6 1404.1,679.5 1404.5,679.3 1404.8,678.7 1405.2,679.0 1405.6,678.5 1406.0,678.5 1406.4,678.6 1406.7,677.7 1407.1,678.3 1407.5,677.6 1407.9,676.7 1408.3,677.6 1408.6,676.9 1409.0,677.3 1409.4,676.6 1409.8,676.8 1410.2,676.0 1410.5,675.9 1410.9,675.4 1411.3,674.5 1411.7,674.9 1412.1,674.6 1412.4,674.8 1412.8,674.7 1413.2,674.9 1413.6,675.3 1414.0,674.4 1414.2,673.7 1414.3,674.2 1414.7,674.7 1415.1,673.9 1415.5,674.9 1415.9,675.2 1416.2,675.7 1416.6,675.8 1417.0,675.7 1417.4,675.0 1417.8,676.3 1418.1,677.0 1418.5,677.1 1418.9,677.3 1419.3,678.2 1419.7,677.8 1420.0,677.8 1420.2,678.1 1420.4,678.2 1420.8,679.4 1421.2,680.0 1421.6,679.1 1421.9,679.7 1422.3,681.3 1422.7,681.0 1423.1,681.6 1423.5,681.9 1423.8,682.6 1424.2,683.3 1424.6,683.5 1425.0,683.9 1425.4,684.3 1425.7,685.4 1426.1,686.2 1426.5,685.4 1426.9,685.9 1427.3,685.2 1427.6,685.2 1428.0,685.5 1428.4,685.9 1428.8,685.8 1429.2,685.4 1429.5,686.4 1429.9,685.7 1430.3,685.9 1430.7,686.2 1431.1,685.8 1431.4,686.8 1431.8,686.2 1432.2,687.1 1432.6,687.1 1433.0,687.3 1433.3,686.7 1433.7,687.5 1434.1,687.1 1434.5,687.8 1434.9,687.0 1435.2,686.8 1435.6,687.6 1435.8,687.1 1436.0,687.7 1436.4,687.2 1436.8,688.4 1437.1,689.4 1437.5,688.4 1437.9,689.4 1438.3,690.2 1438.7,690.4 1439.0,691.3 1439.4,691.1 1439.8,691.9 1440.2,691.2 1440.6,692.0 1440.9,693.5 1441.3,693.9 1441.7,693.9 1442.1,694.9 1442.5,694.5 1442.8,694.9 1443.2,695.6 1443.6,695.8 1444.0,695.7 1444.4,695.5 1444.7,695.7 1445.1,696.6 1445.4,696.3 1445.5,697.1 1445.9,696.7 1446.3,697.4 1446.6,696.8 1447.0,697.8 1447.4,697.8 1447.8,697.6 1448.2,697.4 1448.5,698.4 1448.9,698.2 1449.3,698.0 1449.7,698.1 1450.1,698.6 1450.4,698.3 1450.8,698.6 1451.2,698.0 1451.6,698.5 1451.9,699.4 1452.3,699.9 1452.7,699.0 1453.1,698.6 1453.5,699.1 1453.8,698.9 1454.2,699.6 1454.6,700.0 1455.0,699.2 1455.4,699.6 1455.7,699.4 1456.1,700.3 1456.5,699.7 1456.9,700.1 1457.3,699.6 1457.6,700.2 1458.0,700.3 1458.4,700.3 1458.8,699.5 1459.2,700.1 1459.5,700.5 1459.9,700.6 1460.3,700.7 1460.7,699.6 1461.1,701.1 1461.4,700.6 1461.8,700.0 1462.2,699.8" fill="none" stroke="#8c8c92" stroke-width="1.5" stroke-linejoin="round"/>
<polyline points="1163.7,698.7 1164.1,698.9 1164.5,698.8 1164.9,699.3 1165.2,698.2 1165.6,698.4 1166.0,698.7 1166.4,698.4 1166.8,698.5 1167.1,698.7 1167.5,698.3 1167.9,698.7 1168.3,698.6 1168.7,698.8 1169.0,698.4 1169.4,698.5 1169.8,698.4 1170.2,698.6 1170.5,698.4 1170.9,698.7 1171.3,698.2 1171.7,698.4 1172.1,698.3 1172.4,698.3 1172.8,698.7 1173.2,698.2 1173.6,697.8 1174.0,698.8 1174.3,698.8 1174.7,698.7 1175.1,698.1 1175.5,698.3 1175.9,698.0 1176.2,698.1 1176.6,698.2 1177.0,698.2 1177.4,698.3 1177.8,698.0 1178.1,698.5 1178.5,698.3 1178.9,698.1 1179.3,697.7 1179.7,698.4 1180.0,698.4 1180.4,698.3 1180.8,697.9 1181.2,698.2 1181.6,697.7 1181.9,698.6 1182.3,697.8 1182.7,697.8 1183.1,698.4 1183.5,698.0 1183.8,697.7 1184.2,698.0 1184.6,697.7 1185.0,697.4 1185.4,697.9 1185.7,698.0 1186.1,698.2 1186.5,697.8 1186.9,698.0 1187.3,698.0 1187.6,697.9 1188.0,697.7 1188.4,698.2 1188.8,698.3 1189.2,698.5 1189.5,697.5 1189.9,697.8 1190.3,697.4 1190.7,697.8 1191.1,698.0 1191.4,697.7 1191.8,697.8 1192.2,698.1 1192.6,698.0 1193.0,697.3 1193.3,697.7 1193.7,697.7 1194.1,697.8 1194.5,697.9 1194.9,697.5 1195.2,697.8 1195.6,697.9 1196.0,697.8 1196.4,698.0 1196.8,697.7 1197.1,697.4 1197.5,697.9 1197.9,697.3 1198.3,697.8 1198.7,697.2 1199.0,696.4 1199.4,695.0 1199.8,693.9 1200.2,693.6 1200.6,694.1 1200.9,695.1 1201.3,696.4 1201.7,697.6 1202.1,697.7 1202.5,697.5 1202.8,697.4 1203.2,697.5 1203.6,697.0 1204.0,697.6 1204.4,697.8 1204.7,697.1 1205.1,697.9 1205.5,697.4 1205.9,697.9 1206.3,697.5 1206.6,698.2 1207.0,697.4 1207.4,697.7 1207.8,697.9 1208.2,697.2 1208.5,697.4 1208.9,697.6 1209.3,697.8 1209.7,697.6 1210.1,697.7 1210.4,697.4 1210.8,697.4 1211.2,697.8 1211.6,697.8 1212.0,697.8 1212.3,698.0 1212.7,697.8 1213.1,697.6 1213.5,697.4 1213.9,697.3 1214.2,697.8 1214.6,697.4 1215.0,697.7 1215.4,697.0 1215.8,697.6 1216.1,697.4 1216.5,697.8 1216.9,697.8 1217.3,697.5 1217.7,697.7 1218.0,697.5 1218.4,698.0 1218.8,697.4 1219.2,697.8 1219.6,697.1 1219.9,697.6 1220.3,697.2 1220.7,697.9 1221.1,697.4 1221.5,697.8 1221.8,697.6 1222.2,697.5 1222.3,697.6 1222.6,697.4 1223.0,697.3 1223.4,697.2 1223.7,697.4 1224.1,697.6 1224.5,697.4 1224.9,697.1 1225.3,697.4 1225.6,696.5 1226.0,696.6 1226.4,696.5 1226.8,696.0 1227.2,695.8 1227.5,695.8 1227.9,695.9 1228.3,695.3 1228.7,695.1 1229.1,695.2 1229.4,694.4 1229.8,694.3 1230.2,694.7 1230.6,693.9 1231.0,694.1 1231.3,693.2 1231.7,693.1 1232.1,693.3 1232.5,693.0 1232.9,692.6 1233.2,692.4 1233.3,691.9 1233.6,692.0 1234.0,692.0 1234.4,691.6 1234.8,692.1 1235.1,691.2 1235.5,690.9 1235.9,691.0 1236.3,690.9 1236.6,690.3 1237.0,689.7 1237.4,690.0 1237.8,690.1 1238.2,689.2 1238.5,689.8 1238.9,688.9 1239.3,689.0 1239.7,688.3 1240.1,688.5 1240.4,687.7 1240.8,687.6 1241.2,687.9 1241.6,687.6 1242.0,686.9 1242.3,686.1 1242.7,686.1 1243.1,685.7 1243.5,685.4 1243.9,684.8 1244.2,684.5 1244.6,684.1 1245.0,684.0 1245.4,683.0 1245.8,682.5 1246.1,682.7 1246.5,681.3 1246.9,681.2 1247.3,681.0 1247.7,680.8 1248.0,679.5 1248.4,679.0 1248.8,678.7 1249.2,678.3 1249.6,676.9 1249.9,676.7 1250.3,676.0 1250.7,674.4 1251.1,673.8 1251.5,673.4 1251.8,673.0 1252.2,671.9 1252.6,671.8 1253.0,670.3 1253.4,669.7 1253.6,669.2 1253.7,669.0 1254.1,667.5 1254.5,666.5 1254.9,665.4 1255.3,664.0 1255.6,663.1 1256.0,661.8 1256.4,660.5 1256.8,658.6 1257.2,656.6 1257.5,655.2 1257.9,653.1 1258.3,651.7 1258.7,649.6 1259.1,647.6 1259.4,645.6 1259.8,642.5 1259.9,642.2 1260.2,640.7 1260.6,637.4 1261.0,633.5 1261.3,629.8 1261.7,625.2 1262.1,621.8 1262.5,618.0 1262.9,615.2 1263.0,614.4 1263.2,612.8 1263.6,610.3 1264.0,607.7 1264.4,605.4 1264.8,603.4 1265.1,601.9 1265.5,600.8 1265.7,600.8 1265.9,601.2 1266.3,601.8 1266.7,603.6 1267.0,605.0 1267.4,607.5 1267.8,610.4 1268.2,612.3 1268.5,614.0 1268.6,615.6 1268.9,617.8 1269.3,621.0 1269.7,624.9 1270.1,628.3 1270.5,631.8 1270.8,634.6 1271.2,637.3 1271.6,638.6 1272.0,640.9 1272.4,641.9 1272.7,643.6 1273.1,644.8 1273.5,646.4 1273.9,647.7 1274.3,648.4 1274.6,648.8 1275.0,649.3 1275.4,650.1 1275.8,650.5 1276.2,651.0 1276.3,650.4 1276.5,650.4 1276.9,650.6 1277.3,650.0 1277.7,649.6 1278.1,648.1 1278.4,647.4 1278.8,646.4 1279.2,644.9 1279.6,643.5 1280.0,642.3 1280.3,640.9 1280.7,639.2 1281.0,638.0 1281.1,637.0 1281.5,633.9 1281.9,631.2 1282.2,626.4 1282.6,621.5 1283.0,616.9 1283.4,611.7 1283.8,607.5 1284.1,602.9 1284.5,599.6 1284.9,595.3 1285.3,591.3 1285.7,588.6 1286.0,587.5 1286.1,587.1 1286.4,587.1 1286.8,588.9 1287.2,591.5 1287.6,595.3 1287.9,599.2 1288.3,603.8 1288.7,609.0 1289.1,613.8 1289.5,619.7 1289.6,622.5 1289.8,625.5 1290.2,632.0 1290.6,640.7 1291.0,649.1 1291.4,657.2 1291.7,663.1 1291.9,665.4 1292.1,667.6 1292.5,670.9 1292.9,673.8 1293.3,677.4 1293.6,679.3 1294.0,681.8 1294.4,683.9 1294.8,686.0 1295.2,687.3 1295.5,688.9 1295.8,689.2 1295.9,689.5 1296.3,690.0 1296.7,690.8 1297.1,691.2 1297.4,691.6 1297.8,692.8 1298.2,692.7 1298.6,694.0 1299.0,694.5 1299.3,694.3 1299.7,694.7 1300.1,694.9 1300.5,695.8 1300.9,695.7 1301.2,695.9 1301.6,695.9 1302.0,696.4 1302.4,696.4 1302.7,697.0 1303.1,696.9 1303.5,697.1 1303.6,696.8 1303.9,697.3 1304.3,697.3 1304.6,697.0 1305.0,696.8 1305.4,697.2 1305.8,697.3 1306.2,697.5 1306.5,697.2 1306.9,697.4 1307.3,697.2 1307.7,697.6 1308.1,698.0 1308.4,697.9 1308.8,698.1 1309.2,698.2 1309.6,697.6 1310.0,697.8 1310.3,698.3 1310.7,697.6 1311.1,698.0 1311.5,698.4 1311.9,698.1 1312.2,698.2 1312.6,698.4 1313.0,698.8 1313.4,698.3 1313.8,698.3 1314.1,699.0 1314.5,698.2 1314.9,698.2 1315.3,698.5 1315.7,698.4 1316.0,698.5 1316.4,698.7 1316.8,698.6 1317.2,698.1 1317.6,698.9 1317.9,698.4 1318.3,698.5 1318.7,698.7 1319.1,698.6 1319.3,698.9 1319.5,698.7 1319.8,698.5 1320.2,698.4 1320.6,698.7 1321.0,697.6 1321.4,698.5 1321.7,698.3 1322.1,698.4 1322.5,698.4 1322.9,697.8 1323.3,698.2 1323.6,697.7 1324.0,697.7 1324.4,698.2 1324.8,697.6 1325.2,697.9 1325.5,697.0 1325.9,697.7 1326.3,697.8 1326.7,697.9 1327.1,697.7 1327.4,697.4 1327.8,697.5 1328.2,697.5 1328.6,697.3 1329.0,697.1 1329.3,696.6 1329.7,697.3 1330.1,697.0 1330.5,697.1 1330.9,697.2 1331.2,697.1 1331.4,697.0 1331.6,696.5 1332.0,696.7 1332.4,696.8 1332.8,696.5 1333.1,696.5 1333.5,696.6 1333.9,696.5 1334.3,696.8 1334.7,696.4 1335.0,696.4 1335.4,696.6 1335.8,696.8 1336.2,696.1 1336.6,696.4 1336.9,695.6 1337.3,696.6 1337.7,696.2 1338.1,696.5 1338.5,696.3 1338.8,696.1 1339.2,696.6 1339.6,696.4 1340.0,696.3 1340.4,696.3 1340.7,696.1 1341.1,696.0 1341.5,696.0 1341.9,696.2 1342.3,696.3 1342.6,696.5 1343.0,696.4 1343.4,696.4 1343.8,696.0 1344.2,696.3 1344.5,696.5 1344.9,696.0 1345.3,696.4 1345.7,696.3 1346.1,696.2 1346.4,696.0 1346.8,696.7 1347.2,696.4 1347.6,696.0 1348.0,696.2 1348.3,696.3 1348.7,696.2 1349.1,695.7 1349.5,696.1 1349.9,695.8 1350.2,695.8 1350.6,696.1 1351.0,695.8 1351.4,696.1 1351.8,696.1 1352.1,696.2 1352.5,695.7 1352.7,696.0 1352.9,696.0 1353.3,696.2 1353.7,695.4 1354.0,695.6 1354.4,695.8 1354.8,696.0 1355.2,696.2 1355.6,695.7 1355.9,695.7 1356.3,696.1 1356.7,695.4 1357.1,695.5 1357.5,695.9 1357.8,695.8 1358.2,695.7 1358.6,695.6 1359.0,695.6 1359.4,696.0 1359.7,695.2 1360.1,695.5 1360.5,695.2 1360.9,695.2 1361.3,695.5 1361.6,695.4 1362.0,695.2 1362.4,695.2 1362.8,695.4 1363.2,695.5 1363.5,695.3 1363.9,695.5 1364.3,695.4 1364.7,695.8 1365.1,695.2 1365.4,695.5 1365.8,695.3 1366.2,695.2 1366.6,695.0 1367.0,694.6 1367.3,695.0 1367.7,695.4 1368.1,694.9 1368.5,695.1 1368.7,694.8 1368.8,695.1 1369.2,695.0 1369.6,694.9 1370.0,694.9 1370.4,695.2 1370.7,694.8 1371.1,694.5 1371.5,694.1 1371.9,694.5 1372.3,694.4 1372.6,694.0 1373.0,694.0 1373.4,693.6 1373.8,693.8 1374.2,693.8 1374.5,693.3 1374.9,693.2 1375.3,693.6 1375.7,693.3 1376.1,693.7 1376.4,693.2 1376.8,693.2 1377.2,692.9 1377.6,692.9 1378.0,692.7 1378.3,692.5 1378.7,692.2 1379.1,692.2 1379.3,692.3 1379.5,692.5 1379.9,691.6 1380.2,691.4 1380.6,691.8 1381.0,691.3 1381.4,691.7 1381.8,691.5 1382.1,690.9 1382.5,690.2 1382.9,690.6 1383.3,690.3 1383.7,689.4 1384.0,690.1 1384.4,689.2 1384.8,689.0 1385.2,688.9 1385.6,688.6 1385.9,687.7 1386.3,688.4 1386.7,688.0 1387.1,687.7 1387.5,687.6 1387.8,687.6 1388.2,686.6 1388.6,686.8 1389.0,687.2 1389.4,686.7 1389.7,686.3 1390.1,686.2 1390.5,686.6 1390.9,686.1 1391.3,686.0 1391.6,685.9 1392.0,685.9 1392.4,686.5 1392.8,685.5 1393.2,685.9 1393.5,685.5 1393.9,685.3 1394.3,686.1 1394.7,686.4 1395.1,685.8 1395.4,686.1 1395.8,686.2 1396.2,686.4 1396.6,685.7 1397.0,686.3 1397.3,686.6 1397.7,686.3 1398.1,686.5 1398.5,686.2 1398.9,686.4 1399.2,686.6 1399.6,686.2 1400.0,686.5 1400.4,686.2 1400.8,686.0 1401.1,686.5 1401.5,686.6 1401.9,686.4 1402.3,686.2 1402.7,686.4 1402.8,686.4 1403.0,686.4 1403.4,686.3 1403.8,686.2 1404.2,686.5 1404.6,686.3 1404.9,686.1 1405.3,686.1 1405.7,685.8 1406.1,685.5 1406.5,685.5 1406.8,685.5 1407.2,685.4 1407.6,684.5 1408.0,684.6 1408.4,684.9 1408.7,684.7 1409.1,683.8 1409.5,683.7 1409.9,683.9 1410.3,683.4 1410.6,684.0 1411.0,683.4 1411.4,683.1 1411.8,683.6 1412.2,683.2 1412.5,682.7 1412.9,682.5 1413.3,682.9 1413.7,682.6 1414.1,682.2 1414.4,682.7 1414.5,682.9 1414.8,682.6 1415.2,682.8 1415.6,682.5 1416.0,683.1 1416.3,683.6 1416.7,683.1 1417.1,684.2 1417.5,684.4 1417.9,684.8 1418.2,685.2 1418.6,685.8 1419.0,686.1 1419.4,686.7 1419.8,687.4 1420.1,687.5 1420.5,687.8 1420.8,688.1 1420.9,688.0 1421.3,688.5 1421.7,688.3 1422.0,688.5 1422.4,689.8 1422.8,689.5 1423.2,690.0 1423.6,690.8 1423.9,690.3 1424.3,690.8 1424.7,691.0 1425.1,691.4 1425.5,691.1 1425.8,691.3 1426.2,691.7 1426.6,691.8 1427.0,692.1 1427.3,692.1 1427.4,692.4 1427.7,692.3 1428.1,692.6 1428.5,692.4 1428.9,692.3 1429.3,692.5 1429.6,692.3 1430.0,692.0 1430.4,693.3 1430.8,692.8 1431.2,693.0 1431.5,693.0 1431.9,693.3 1432.3,693.0 1432.7,693.1 1433.1,693.2 1433.4,693.2 1433.8,693.3 1434.2,693.8 1434.6,692.9 1434.9,693.4 1435.3,693.6 1435.7,693.3 1436.1,693.6 1436.5,694.1 1436.8,693.3 1437.2,694.1 1437.6,693.8 1437.9,693.8 1438.0,693.5 1438.4,693.6 1438.7,694.1 1439.1,694.5 1439.5,694.6 1439.9,694.5 1440.3,694.6 1440.6,695.2 1441.0,695.7 1441.4,695.6 1441.8,696.2 1442.2,696.5 1442.5,696.8 1442.9,696.8 1443.3,697.2 1443.7,697.2 1444.1,697.3 1444.4,697.7 1444.8,698.6 1445.2,698.5 1445.4,698.1 1445.6,698.2 1446.0,697.6 1446.3,698.3 1446.7,698.4 1447.1,698.1 1447.5,698.2 1447.9,698.6 1448.2,698.4 1448.6,698.9 1449.0,698.9 1449.4,698.4 1449.8,699.1 1450.1,698.5 1450.5,698.6 1450.9,698.7 1451.3,698.7 1451.7,698.8 1452.0,699.5 1452.4,699.3 1452.8,699.2 1453.2,698.8 1453.6,699.4 1453.9,699.3 1454.3,699.2 1454.7,698.8 1455.1,699.6 1455.5,699.6 1455.8,699.1 1456.2,699.8 1456.6,699.2 1457.0,699.4 1457.4,699.7 1457.7,699.4 1458.1,699.6 1458.5,699.3 1458.9,699.3 1459.2,699.0 1459.3,699.4 1459.6,699.4 1460.0,699.6 1460.4,699.5 1460.8,699.2 1461.2,700.0 1461.5,699.3 1461.9,699.7 1462.3,699.5 1462.7,699.4 1463.1,699.3 1463.4,699.5 1463.8,699.7 1464.2,699.5 1464.6,699.6 1465.0,699.7 1465.3,699.5 1465.7,699.4 1466.1,699.6 1466.5,699.6 1466.7,700.0" fill="none" stroke="#f00" stroke-width="1.7" stroke-linejoin="round"/>
<polyline points="1231.9,698.6 1232.3,698.3 1232.7,698.3 1233.0,698.7 1233.4,697.7 1233.8,697.7 1234.2,697.9 1234.6,697.3 1234.9,697.2 1235.3,697.0 1235.7,697.0 1236.1,696.6 1236.5,696.9 1236.8,696.5 1237.2,696.4 1237.6,695.9 1238.0,695.9 1238.4,695.8 1238.7,695.8 1239.1,695.4 1239.5,695.2 1239.9,695.1 1240.3,694.3 1240.6,694.2 1241.0,695.4 1241.4,694.9 1241.8,694.1 1242.2,694.1 1242.5,693.7 1242.9,693.5 1243.3,692.7 1243.7,693.7 1244.1,693.2 1244.4,692.2 1244.8,692.6 1245.2,692.4 1245.6,692.6 1246.0,692.9 1246.3,692.1 1246.7,691.9 1247.1,692.2 1247.5,691.8 1247.9,691.4 1248.2,691.4 1248.6,690.9 1249.0,690.6 1249.4,690.4 1249.8,690.3 1249.9,689.8 1250.1,689.5 1250.5,689.4 1250.9,689.5 1251.3,688.6 1251.7,688.6 1252.0,687.7 1252.4,688.0 1252.8,686.8 1253.2,686.7 1253.6,686.6 1253.9,685.7 1254.3,685.0 1254.7,684.3 1255.1,684.1 1255.3,683.8 1255.5,683.0 1255.8,682.4 1256.2,681.3 1256.6,680.1 1257.0,679.9 1257.4,678.1 1257.7,676.5 1258.1,675.8 1258.5,674.6 1258.9,672.7 1259.3,671.4 1259.6,669.6 1260.0,668.4 1260.4,666.9 1260.8,664.4 1261.2,662.5 1261.5,659.9 1261.9,658.0 1262.3,656.5 1262.6,654.7 1262.7,653.4 1263.1,650.9 1263.4,648.4 1263.8,645.2 1264.2,642.3 1264.6,640.1 1265.0,638.8 1265.1,638.8 1265.3,639.0 1265.7,639.6 1266.1,640.2 1266.5,642.7 1266.9,643.5 1267.2,645.2 1267.6,647.4 1267.8,647.6 1268.0,648.8 1268.4,650.4 1268.7,653.3 1269.1,655.6 1269.5,658.0 1269.9,660.7 1270.3,663.1 1270.5,664.1 1270.6,663.6 1271.0,665.5 1271.4,666.9 1271.8,667.6 1272.2,668.7 1272.5,669.1 1272.9,669.9 1273.1,670.1 1273.3,670.6 1273.7,670.5 1274.1,671.4 1274.4,671.1 1274.8,671.0 1275.2,672.3 1275.6,672.8 1276.0,671.9 1276.3,671.2 1276.4,672.5 1276.7,672.5 1277.1,671.7 1277.5,671.9 1277.9,671.4 1278.2,670.8 1278.6,669.9 1279.0,669.6 1279.4,668.5 1279.8,667.9 1280.1,667.2 1280.4,666.3 1280.5,666.3 1280.9,664.5 1281.3,662.8 1281.7,660.3 1282.0,656.5 1282.4,653.8 1282.8,650.4 1283.1,647.5 1283.2,646.8 1283.6,641.2 1283.9,633.8 1284.3,626.3 1284.7,620.2 1285.1,615.1 1285.4,614.5 1285.5,614.7 1285.8,616.4 1286.2,619.8 1286.6,623.9 1287.0,630.2 1287.4,634.9 1287.6,639.2 1287.7,639.5 1288.1,643.8 1288.5,649.0 1288.9,654.0 1289.3,658.5 1289.6,663.0 1290.0,667.4 1290.4,670.8 1290.8,675.0 1291.2,679.0 1291.5,682.4 1291.9,685.6 1292.3,688.3 1292.7,690.3 1293.0,691.2 1293.1,692.1 1293.4,692.0 1293.8,693.3 1294.2,694.2 1294.6,694.2 1295.0,694.5 1295.3,695.3 1295.7,695.8 1296.1,696.6 1296.5,695.6 1296.9,696.6 1297.2,697.5 1297.6,697.5 1297.7,697.3 1298.0,697.9 1298.4,697.4 1298.8,697.8 1299.1,697.3 1299.5,697.5 1299.9,698.9 1300.3,698.0 1300.7,698.7 1301.0,697.8 1301.4,698.2 1301.8,698.2 1302.2,698.8 1302.6,697.9 1302.9,697.8 1303.3,699.0 1303.7,698.5 1304.1,698.9 1304.5,698.7 1304.8,699.2 1305.2,698.1 1305.6,699.1 1306.0,698.8 1306.4,698.6 1306.7,699.0 1307.1,698.8 1307.5,698.9 1307.9,698.8 1308.3,699.2 1308.6,698.9 1309.0,698.8 1309.4,698.9 1309.8,698.7 1310.2,698.8 1310.5,698.5 1310.9,698.9 1311.3,698.8 1311.7,699.0 1312.1,698.9 1312.4,699.2 1312.8,698.6 1313.2,699.1 1313.5,699.0 1313.6,698.6 1314.0,698.6 1314.3,698.9 1314.7,699.4 1315.1,698.6 1315.5,698.6 1315.9,699.2 1316.2,698.4 1316.6,698.9 1317.0,699.0 1317.4,698.6 1317.8,698.7 1318.1,698.5 1318.5,699.1 1318.9,697.9 1319.3,698.7 1319.7,699.0 1320.0,698.2 1320.4,698.5 1320.8,698.3 1321.2,698.5 1321.6,698.3 1321.9,698.2 1322.3,698.5 1322.7,698.0 1323.1,698.3 1323.5,698.5 1323.8,698.1 1324.2,697.9 1324.6,698.1 1325.0,698.3 1325.4,697.8 1325.7,698.6 1326.1,698.3 1326.5,697.9 1326.9,698.3 1327.3,697.8 1327.6,697.8 1328.0,697.4 1328.4,698.0 1328.8,697.9 1329.2,697.5 1329.5,698.5 1329.9,696.5 1330.3,697.8 1330.7,697.8 1331.1,697.2 1331.4,697.5 1331.8,698.1 1332.2,697.3 1332.6,697.2 1333.0,697.6 1333.3,697.5 1333.7,697.3 1334.1,697.7 1334.5,697.3 1334.9,697.3 1335.2,697.7 1335.6,697.9 1336.0,697.5 1336.4,697.7 1336.7,697.1 1337.1,697.4 1337.5,697.2 1337.9,697.4 1338.3,697.3 1338.6,697.7 1339.0,697.2 1339.4,696.8 1339.8,697.6 1340.2,697.7 1340.5,697.5 1340.9,697.6 1341.3,697.7 1341.7,697.4 1342.1,697.6 1342.4,697.0 1342.8,697.5 1343.2,697.4 1343.6,697.2 1344.0,697.6 1344.3,697.0 1344.7,697.7 1345.1,697.8 1345.5,697.7 1345.9,697.6 1346.2,698.0 1346.6,697.6 1347.0,698.1 1347.4,697.1 1347.8,697.6 1348.1,697.8 1348.5,697.9 1348.9,697.7 1349.3,697.6 1349.7,697.9 1350.0,697.9 1350.4,697.6 1350.8,697.8 1351.2,697.3 1351.6,697.2 1351.9,697.6 1352.3,697.4 1352.7,698.1 1353.1,697.4 1353.5,697.6 1353.8,697.4 1353.9,697.0 1354.2,698.4 1354.6,697.5 1355.0,698.0 1355.4,697.3 1355.7,698.0 1356.1,697.7 1356.5,697.4 1356.9,697.2 1357.3,697.4 1357.6,697.6 1358.0,697.5 1358.4,696.9 1358.8,697.2 1359.2,697.7 1359.5,696.8 1359.9,696.8 1360.3,696.6 1360.7,697.0 1361.1,696.5 1361.4,697.1 1361.8,696.5 1362.2,696.8 1362.6,696.3 1363.0,696.1 1363.3,696.6 1363.7,696.3 1364.1,696.2 1364.5,695.7 1364.9,695.8 1365.2,696.5 1365.6,695.8 1366.0,695.6 1366.4,695.1 1366.8,696.4 1367.1,695.9 1367.5,695.2 1367.9,696.1 1368.3,696.0 1368.7,695.4 1369.0,695.1 1369.4,695.7 1369.8,695.2 1370.2,695.3 1370.6,694.8 1370.9,695.3 1371.3,694.9 1371.7,695.5 1372.1,695.2 1372.5,695.1 1372.8,694.7 1373.2,694.8 1373.6,695.2 1374.0,694.7 1374.4,694.6 1374.7,694.9 1375.1,694.9 1375.5,694.8 1375.9,695.3 1376.3,694.6 1376.6,694.5 1377.0,694.8 1377.4,694.2 1377.8,694.9 1378.2,694.6 1378.5,694.5 1378.9,693.5 1379.3,694.7 1379.7,693.9 1380.1,693.7 1380.4,693.8 1380.8,693.5 1381.2,694.1 1381.6,694.5 1381.7,693.4 1382.0,694.0 1382.3,693.6 1382.7,693.8 1383.1,692.9 1383.5,692.9 1383.9,693.3 1384.2,692.6 1384.6,692.7 1385.0,692.6 1385.4,692.4 1385.8,692.3 1386.1,691.8 1386.5,691.7 1386.9,691.7 1387.3,691.0 1387.7,691.3 1388.0,690.7 1388.1,690.5 1388.4,689.9 1388.8,690.1 1389.2,688.7 1389.6,688.6 1389.9,687.9 1390.3,687.3 1390.7,686.0 1391.1,685.4 1391.5,684.9 1391.8,684.2 1392.2,683.1 1392.6,682.2 1393.0,680.5 1393.4,679.5 1393.7,679.0 1394.1,678.9 1394.2,679.1 1394.5,679.0 1394.9,678.9 1395.3,678.9 1395.6,679.8 1396.0,680.8 1396.4,681.3 1396.8,682.1 1397.2,682.9 1397.5,683.3 1397.6,683.3 1397.9,683.2 1398.3,684.6 1398.7,685.0 1399.1,685.7 1399.4,687.1 1399.8,687.4 1400.2,688.3 1400.6,689.1 1400.9,689.0 1401.0,689.1 1401.3,689.2 1401.7,689.2 1402.1,689.1 1402.5,689.1 1402.8,689.6 1403.2,689.3 1403.6,689.8 1404.0,689.2 1404.4,689.1 1404.7,689.3 1405.1,689.3 1405.5,689.2 1405.9,689.6 1406.3,689.5 1406.6,689.2 1407.0,689.1 1407.2,689.3 1407.4,688.5 1407.8,689.4 1408.2,689.0 1408.5,688.8 1408.9,689.2 1409.3,689.3 1409.7,689.3 1410.1,688.7 1410.4,688.3 1410.8,688.4 1411.2,688.3 1411.6,688.4 1412.0,687.9 1412.3,688.7 1412.7,687.8 1413.1,687.7 1413.5,688.1 1413.9,686.8 1414.2,688.0 1414.6,687.9 1414.7,687.9 1415.0,687.1 1415.4,687.9 1415.8,687.4 1416.1,687.6 1416.5,687.8 1416.9,688.6 1417.3,688.5 1417.7,687.9 1418.0,689.2 1418.4,689.3 1418.8,689.3 1419.2,689.3 1419.6,689.7 1419.9,689.9 1420.3,690.8 1420.7,690.4 1421.1,690.8 1421.5,691.8 1421.8,691.0 1422.2,691.0 1422.6,692.3 1423.0,692.3 1423.4,692.0 1423.7,693.2 1424.1,693.6 1424.5,693.5 1424.9,693.3 1425.3,693.4 1425.4,693.0 1425.6,693.1 1426.0,693.7 1426.4,693.1 1426.8,692.7 1427.2,692.9 1427.5,693.0 1427.9,693.4 1428.3,693.1 1428.7,693.8 1429.1,693.2 1429.4,693.5 1429.8,693.1 1430.2,693.4 1430.6,693.9 1431.0,693.5 1431.3,693.2 1431.7,694.0 1432.1,693.8 1432.5,693.9 1432.9,694.2 1433.2,693.3 1433.6,693.2 1434.0,693.4 1434.4,693.7 1434.8,693.8 1435.1,693.7 1435.5,694.1 1435.9,693.6 1436.0,693.5 1436.3,693.6 1436.7,694.2 1437.0,694.0 1437.4,694.2 1437.8,693.6 1438.2,694.2 1438.6,695.0 1438.9,694.3 1439.3,693.9 1439.7,694.4 1440.1,694.4 1440.5,694.8 1440.8,695.7 1441.2,695.7 1441.6,695.7 1442.0,695.4 1442.4,695.4 1442.7,695.4 1443.1,696.0 1443.5,695.8 1443.9,696.5 1444.3,696.9 1444.6,696.7 1445.0,697.6 1445.4,698.5 1445.8,698.1 1446.2,697.8 1446.5,699.1 1446.6,698.1 1446.9,698.1 1447.3,698.6 1447.7,698.6 1448.1,698.3 1448.4,698.4 1448.8,697.8 1449.2,698.1 1449.6,698.8 1450.0,698.6 1450.3,698.1 1450.7,697.7 1451.1,698.3 1451.5,698.3 1451.9,697.8 1452.2,698.5 1452.6,698.6 1453.0,699.1 1453.4,698.8 1453.8,697.9 1454.1,699.1 1454.5,698.7 1454.9,699.2 1455.3,698.7 1455.7,698.4 1456.0,698.8 1456.4,698.5 1456.8,698.5 1457.2,698.6 1457.6,698.2 1457.9,698.6 1458.3,699.0 1458.7,699.1 1459.1,699.2 1459.5,698.7 1459.8,699.0 1460.2,698.0 1460.6,698.3 1461.0,699.0 1461.4,699.1 1461.7,698.4 1462.1,699.6 1462.5,699.1 1462.9,698.6 1463.3,699.3 1463.6,699.2 1464.0,699.1 1464.4,698.8 1464.8,698.9 1465.2,698.9 1465.5,698.8 1465.9,699.0 1466.3,698.6 1466.7,699.3 1466.9,699.5" fill="none" stroke="#000" stroke-width="1.7" stroke-linejoin="round"/>
<rect x="1339" y="484.2" width="110" height="58" rx="1" fill="#fff" stroke="#707070" stroke-width="1.3"/>
<path d="M1346 496.0H1360" stroke="#000" stroke-width="1.7"/>
<text x="1367" y="500.9" font-size="12" font-weight="bold" font-family="Liberation Sans" fill="#111" letter-spacing="0.6">rGO - 700˚C</text>
<path d="M1346 513.0H1360" stroke="#f00" stroke-width="1.7"/>
<text x="1367" y="517.9" font-size="12" font-weight="bold" font-family="Liberation Sans" fill="#111" letter-spacing="0.6">S22 - 700˚C</text>
<path d="M1346 530.0H1360" stroke="#a0a0a0" stroke-width="1.7"/>
<text x="1367" y="534.9" font-size="12" font-weight="bold" font-family="Liberation Sans" fill="#111" letter-spacing="0.6">S21 - 500˚C</text>
</svg>
<div id="status" class="a"><div id="sfield" class="a"><span>Click on plot or move cursor to display coordinates!</span></div></div>
</body></html>
